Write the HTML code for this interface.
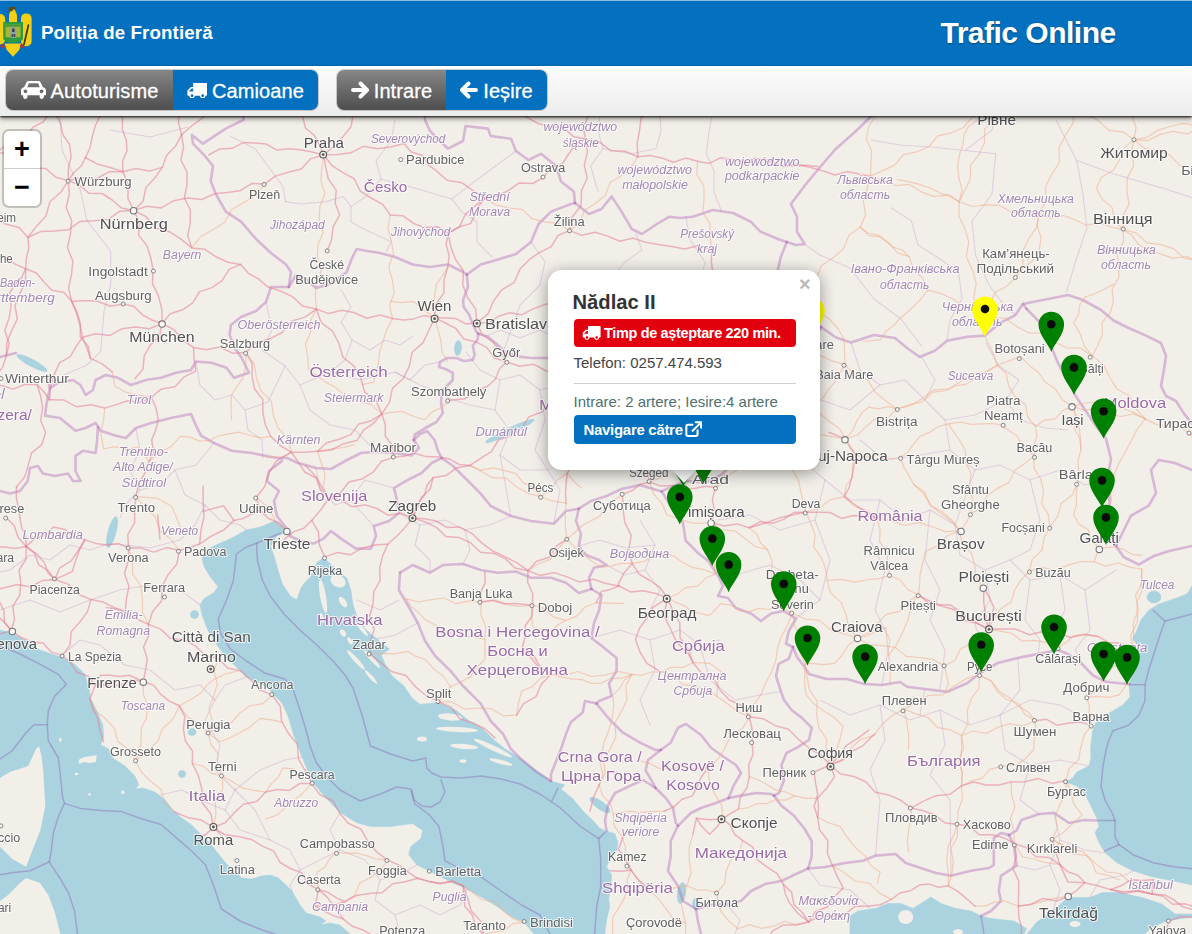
<!DOCTYPE html>
<html lang="ro"><head><meta charset="utf-8"><title>Trafic Online - Poliția de Frontieră</title>
<style>
html,body{margin:0;padding:0;width:1192px;height:934px;overflow:hidden;background:#f2efe9;font-family:"Liberation Sans",sans-serif;}
#map{position:absolute;left:0;top:0;filter:blur(.55px);}
#mk{position:absolute;left:0;top:0;}
#hdr{position:absolute;left:0;top:0;width:1192px;height:66px;background:#0371bf;border-top:1px solid #8bbde3;box-sizing:border-box;}
#crest{position:absolute;left:-6px;top:4px;}
#brand{position:absolute;left:41px;top:19.500px;font-size:18.700px;font-weight:bold;color:#fff;line-height:24px;white-space:nowrap;letter-spacing:.12px}
#title{position:absolute;left:940.500px;top:13.500px;font-size:30px;font-weight:bold;color:#fff;line-height:36px;white-space:nowrap;letter-spacing:-0.500px;text-shadow:0 1px 2px rgba(0,0,0,.35)}
#bar{position:absolute;left:0;top:66px;width:1192px;height:50px;background:linear-gradient(#fdfdfd,#ececec);box-shadow:0 1px 2px rgba(0,0,0,.85),0 3px 5px rgba(0,0,0,.4);}
.grp{position:absolute;top:4px;height:39.500px;display:flex;border-radius:7px;overflow:hidden;box-shadow:0 0 0 1px rgba(0,0,0,.18);}
.btn{height:39.500px;padding-top:4px;display:flex;align-items:center;justify-content:center;color:#fff;font-size:20px;letter-spacing:.1px;white-space:nowrap;box-sizing:border-box;-webkit-text-stroke:.3px #fff;}
.btn .ic{margin-right:5px;flex:none;position:relative;top:-1.500px}
.gray{background:linear-gradient(#868686,#4e4e4e);}
.blue{background:#0371bf;}
#zoom{position:absolute;left:4px;top:131px;width:36px;height:75px;background:#fff;border-radius:5px;box-shadow:0 0 0 2px rgba(0,0,0,.2);}
#zoom div{height:37px;text-align:center;font:bold 27px/36px "Liberation Sans",sans-serif;color:#000;}
#zoom div+div{border-top:1px solid #ccc;}
#pop{position:absolute;left:548px;top:270px;width:272px;height:200px;background:#fff;border-radius:14px;box-shadow:0 3px 16px rgba(0,0,0,.4);}
#tip{position:absolute;left:672px;top:470px;width:0;height:0;border-left:12.500px solid transparent;border-right:12.500px solid transparent;border-top:13.500px solid #fff;filter:drop-shadow(0 3px 3px rgba(0,0,0,.25));}
#pop h3{position:absolute;left:24.500px;top:19.500px;margin:0;font-size:20.200px;line-height:24px;font-weight:bold;color:#333;white-space:nowrap}
#pop .x{position:absolute;left:251px;top:2px;font:bold 20px/24px "Liberation Sans",sans-serif;color:#b9b9b9;}
#pop .red{position:absolute;left:25.500px;top:49px;width:222px;height:28px;border-radius:4px;background:#e2000f;color:#fff;font-size:14.500px;font-weight:bold;line-height:28px;white-space:nowrap;box-sizing:border-box;padding-left:8.500px;display:flex;align-items:center;letter-spacing:-0.350px}
#pop .red .ic{margin-right:3px}
#pop .tel{position:absolute;left:25.500px;top:83px;font-size:15px;line-height:20px;color:#444;white-space:nowrap}
#pop .hr{position:absolute;left:25.500px;top:112.500px;width:222px;height:1px;background:#cfcfcf}
#pop .art{position:absolute;left:25.500px;top:122px;font-size:15px;line-height:20px;color:#4f6f70;white-space:nowrap}
#pop .nav{position:absolute;left:25.500px;top:145px;width:222px;height:29px;border-radius:4px;background:#0371bf;color:#fff;font-size:15px;font-weight:bold;line-height:29px;white-space:nowrap;box-sizing:border-box;padding-left:10px;display:flex;align-items:center;letter-spacing:-0.300px}
#pop .nav .ic{margin-left:2px}
</style></head><body>
<svg id="map" width="1192" height="934" viewBox="0 0 1192 934">
<g>
<rect x="-5" y="-5" width="1202" height="944" fill="#f2efe9"/>
<g fill="#aad3df" stroke="#aad3df" stroke-width="0.6" stroke-linejoin="round">
<path d="M0.0 630.0 L12.0 633.0 L24.0 640.0 L40.0 650.0 L60.4 657.0 L74.5 664.0 L84.6 674.0 L88.6 686.4 L90.6 698.5 L96.6 710.6 L102.7 724.7 L103.7 736.8 L100.7 744.8 L108.7 748.9 L112.7 758.0 L124.8 766.0 L134.9 776.0 L138.9 785.0 L134.9 789.0 L143.0 788.0 L155.0 792.0 L165.0 800.0 L173.0 810.0 L181.0 817.5 L191.0 824.5 L201.0 834.6 L209.4 842.6 L217.4 852.7 L225.5 862.8 L233.0 870.0 L241.6 878.0 L252.0 879.0 L261.7 876.0 L270.0 875.0 L278.5 878.0 L292.0 891.0 L300.0 905.0 L306.0 913.0 L320.0 917.0 L326.0 921.0 L320.0 925.0 L330.0 923.0 L340.0 925.0 L350.0 934.0 L0.0 934.0Z"/>
<path d="M534.0 934.0 L524.0 922.0 L512.0 917.0 L501.0 909.0 L485.0 899.0 L467.0 889.0 L449.0 881.0 L428.9 870.8 L416.8 864.8 L408.7 854.7 L410.7 846.7 L420.8 838.6 L422.8 830.6 L412.7 823.5 L390.6 826.5 L370.5 826.5 L356.4 822.5 L340.0 812.4 L324.0 796.0 L312.0 781.0 L302.0 757.0 L297.0 744.0 L292.0 730.0 L288.0 716.0 L282.0 703.0 L272.0 693.0 L268.6 688.0 L246.4 677.0 L230.3 661.0 L218.3 647.0 L208.2 631.0 L202.0 614.8 L200.0 604.7 L204.0 598.7 L214.0 592.6 L218.0 586.6 L210.0 576.5 L204.0 566.4 L202.0 558.4 L206.0 550.0 L216.0 545.0 L232.0 538.0 L246.4 530.0 L260.5 527.0 L274.6 521.0 L282.7 526.0 L286.7 532.0 L276.6 536.0 L270.6 546.0 L274.6 558.0 L278.7 572.5 L282.7 584.6 L290.7 596.6 L296.8 599.7 L300.8 588.6 L304.8 582.5 L310.9 576.5 L316.9 562.4 L324.0 557.4 L333.0 566.4 L347.0 578.5 L351.0 590.6 L353.0 604.7 L357.0 616.8 L365.0 628.9 L377.0 638.9 L389.4 649.0 L381.3 655.0 L385.0 664.0 L392.0 676.0 L404.0 686.0 L412.0 698.0 L420.0 704.4 L438.4 702.4 L456.5 710.5 L468.6 720.5 L482.7 728.6 L494.8 740.7 L504.8 748.7 L521.0 758.8 L537.0 770.9 L551.0 781.0 L565.0 785.0 L561.0 789.0 L573.0 799.0 L583.0 811.0 L593.4 821.0 L599.5 828.0 L604.7 830.6 L614.8 833.6 L617.8 842.6 L616.8 850.7 L609.7 858.7 L606.7 866.8 L611.7 874.9 L610.7 887.0 L608.7 899.0 L609.7 907.0 L606.7 919.0 L604.7 934.0Z"/>
<path d="M1192.0 586.0 L1187.0 594.0 L1171.0 600.0 L1159.0 604.0 L1149.0 610.0 L1141.0 620.0 L1137.0 630.0 L1133.0 638.5 L1139.0 648.5 L1137.0 660.6 L1133.0 672.7 L1129.0 684.8 L1130.0 697.0 L1122.8 705.0 L1112.7 711.0 L1096.6 721.0 L1092.6 731.0 L1090.6 748.0 L1091.0 758.0 L1089.0 766.0 L1076.8 772.0 L1072.8 778.0 L1065.8 782.0 L1076.8 786.0 L1084.9 794.0 L1091.0 806.0 L1097.0 818.5 L1099.0 826.5 L1095.0 832.6 L1099.0 842.6 L1105.0 852.7 L1117.0 862.8 L1133.0 870.8 L1153.0 877.0 L1173.5 881.0 L1192.0 885.0Z"/>
<path d="M1027.0 934.0 L1036.8 922.0 L1053.0 910.7 L1068.0 897.6 L1089.5 897.6 L1102.6 892.6 L1119.0 892.6 L1142.0 897.6 L1161.8 904.0 L1175.0 914.0 L1192.0 914.0 L1192.0 917.0 L1168.0 920.6 L1152.0 927.0 L1145.0 934.0Z"/>
<path d="M850.0 934.0 L850.0 916.0 L857.9 911.0 L875.5 908.5 L888.0 903.5 L900.7 903.5 L913.0 908.5 L920.8 903.5 L930.9 897.0 L941.0 903.5 L956.0 908.5 L971.0 911.0 L981.0 916.0 L991.0 918.6 L1014.0 921.0 L1026.5 928.6 L1024.0 934.0Z"/>
<ellipse cx="510" cy="431" rx="27" ry="3.2" transform="rotate(-25 510 431)"/>
<ellipse cx="458" cy="348" rx="3.5" ry="7.5" transform="rotate(5 458 348)"/>
<ellipse cx="112" cy="532" rx="4" ry="16" transform="rotate(15 112 532)"/>
<ellipse cx="32" cy="363" rx="17" ry="3.5" transform="rotate(28 32 363)"/>
<ellipse cx="192" cy="732" rx="4" ry="3.5" transform="rotate(0 192 732)"/>
<ellipse cx="182" cy="774" rx="3.5" ry="3.5" transform="rotate(0 182 774)"/>
<ellipse cx="600" cy="805" rx="12" ry="4" transform="rotate(35 600 805)"/>
<ellipse cx="681.5" cy="893" rx="4" ry="10.5" transform="rotate(8 681.5 893)"/>
<ellipse cx="696" cy="904" rx="3.5" ry="6" transform="rotate(0 696 904)"/>
<ellipse cx="194.5" cy="614.5" rx="4" ry="4" transform="rotate(0 194.5 614.5)"/>
<ellipse cx="1154" cy="597" rx="7" ry="6" transform="rotate(0 1154 597)"/>
</g>
<g fill="#f2efe9">
<path d="M39.0 746.0 L41.5 756.0 L43.3 772.0 L45.3 806.0 L40.3 830.6 L32.2 850.7 L26.2 866.8 L12.0 858.7 L4.0 850.7 L0.0 846.7 L0.0 778.0 L10.0 772.0 L28.0 766.0 L32.0 758.0 L36.0 749.0Z"/>
<path d="M26.0 878.0 L40.0 883.0 L48.3 895.0 L54.4 911.0 L60.4 934.0 L0.0 934.0 L0.0 901.0 L8.0 895.0 L20.0 883.0Z"/>
<path d="M78.5 760.0 L84.0 757.0 L92.0 756.0 L96.6 755.0 L96.0 762.0 L90.0 763.0 L84.0 762.0 L79.0 764.0Z"/>
<ellipse cx="323" cy="596" rx="3" ry="17" transform="rotate(-10 323 596)"/>
<ellipse cx="338" cy="581" rx="8" ry="6" transform="rotate(30 338 581)"/>
<ellipse cx="343" cy="602" rx="3" ry="6" transform="rotate(-35 343 602)"/>
<ellipse cx="362" cy="629" rx="1.8" ry="9" transform="rotate(-40 362 629)"/>
<ellipse cx="356" cy="660" rx="2.2" ry="13" transform="rotate(-42 356 660)"/>
<ellipse cx="372" cy="659" rx="2" ry="12" transform="rotate(-42 372 659)"/>
<ellipse cx="371" cy="677" rx="1.8" ry="9" transform="rotate(-42 371 677)"/>
<ellipse cx="343" cy="633" rx="2.5" ry="4" transform="rotate(-30 343 633)"/>
<ellipse cx="350" cy="641" rx="2" ry="4" transform="rotate(-30 350 641)"/>
<ellipse cx="322" cy="618" rx="1.6" ry="5" transform="rotate(-15 322 618)"/>
<ellipse cx="450" cy="717" rx="12" ry="3.5" transform="rotate(5 450 717)"/>
<ellipse cx="457" cy="729.5" rx="21" ry="2.5" transform="rotate(3 457 729.5)"/>
<ellipse cx="464" cy="746.5" rx="14" ry="2.5" transform="rotate(5 464 746.5)"/>
<ellipse cx="493" cy="748" rx="21" ry="2.5" transform="rotate(25 493 748)"/>
<ellipse cx="501" cy="762" rx="12" ry="2" transform="rotate(15 501 762)"/>
<ellipse cx="422" cy="739" rx="5" ry="2.5" transform="rotate(0 422 739)"/>
<ellipse cx="463" cy="761" rx="3.5" ry="1.8" transform="rotate(0 463 761)"/>
<ellipse cx="122.8" cy="792.3" rx="1.6" ry="2" transform="rotate(0 122.8 792.3)"/>
<ellipse cx="89.6" cy="794.3" rx="1.3" ry="1.3" transform="rotate(0 89.6 794.3)"/>
<ellipse cx="76.5" cy="774" rx="1.8" ry="1.3" transform="rotate(0 76.5 774)"/>
<ellipse cx="60.4" cy="739.8" rx="1.3" ry="2" transform="rotate(20 60.4 739.8)"/>
<ellipse cx="905.7" cy="917" rx="7.5" ry="7" transform="rotate(0 905.7 917)"/>
<ellipse cx="958" cy="932" rx="5" ry="3" transform="rotate(0 958 932)"/>
<ellipse cx="1075" cy="924" rx="5.5" ry="3" transform="rotate(0 1075 924)"/>
</g>
<g fill="none" stroke="#b06ab8" stroke-opacity=".42" stroke-width="2.600" stroke-linejoin="round" stroke-linecap="round">
<path d="M243.5 116.0 L243.5 119.8 L225.8 128.6 L203.0 143.7 L191.9 134.9 L193.0 143.7 L203.0 153.8 L213.0 166.0 L210.7 181.0 L215.8 194.0 L225.8 211.6 L241.0 221.7 L256.0 239.0 L271.0 253.0 L286.0 264.5 L291.0 272.0 L288.8 287.0"/>
<path d="M288.8 287.0 L271.0 287.0 L266.0 302.0 L256.0 311.0 L241.0 317.0 L230.9 325.0 L229.6 335.0 L236.0 350.0 L241.6 357.7 L249.0 372.8 L234.0 377.8 L226.5 367.8 L211.4 362.7 L196.0 361.5 L191.0 370.0 L176.0 372.8 L161.0 377.8 L146.0 380.0 L130.9 385.0 L118.0 377.8 L105.7 375.0 L95.6 380.0 L93.0 390.0 L85.6 395.0 L80.5 385.0 L73.0 380.0 L57.9 382.9 L50.0 388.0"/>
<path d="M47.8 380.0 L50.0 388.0 L46.6 403.0 L45.0 415.6 L60.0 418.0 L75.5 430.7 L85.6 428.0 L95.6 423.0 L100.7 430.7 L115.8 435.7 L125.9 438.0 L135.9 428.0 L151.0 423.0 L171.0 418.0 L191.0 414.0 L196.0 425.6 L201.0 435.7 L214.0 443.0 L231.6 450.8 L251.7 453.0 L276.9 458.0 L287.0 458.0 L298.0 463.0 L316.0 468.0 L331.0 469.0 L346.0 460.5 L361.0 453.0 L376.0 451.7 L394.0 453.0 L411.6 455.5 L419.0 448.0 L413.7 440.0"/>
<path d="M98.0 427.0 L96.9 443.0 L95.6 453.0 L83.0 450.8 L75.5 455.8 L75.5 471.0 L80.5 481.0 L73.0 481.0 L68.0 473.5 L55.0 476.0 L42.8 473.5 L37.8 466.0 L30.0 468.0 L27.7 481.0 L20.0 491.0 L10.0 493.6 L0.0 491.0"/>
<path d="M0.0 357.0 L8.0 355.0 L16.0 353.0"/>
<path d="M282.0 460.9 L269.0 471.0 L266.8 481.0 L279.0 491.0 L274.0 501.0 L276.9 516.0 L287.0 528.8 L290.0 534.0"/>
<path d="M290.0 536.0 L300.8 541.0 L313.4 543.6 L323.5 538.6 L331.0 531.0 L341.0 538.6 L356.0 548.6 L371.0 548.6 L376.0 536.0 L373.8 526.0 L389.0 521.0 L399.0 513.0 L396.5 498.0 L394.0 488.0 L406.5 480.7 L421.6 473.0 L431.7 463.0 L441.8 458.0"/>
<path d="M288.8 287.0 L296.0 275.0 L306.0 279.0 L316.0 288.0 L330.0 284.0 L346.7 272.0 L352.0 258.0 L356.7 249.0 L367.0 251.0 L380.0 253.0 L395.0 257.0 L412.7 264.5 L430.0 267.0 L448.0 264.5 L463.0 272.0 L466.8 274.6"/>
<path d="M466.8 274.6 L468.0 287.0 L463.0 300.0 L463.7 307.0 L469.0 314.6 L472.8 323.7 L476.4 331.9 L478.3 333.7"/>
<path d="M466.8 274.6 L480.7 264.5 L498.0 259.5 L516.0 254.0 L531.0 242.0 L538.6 224.0 L551.0 211.6 L571.0 204.0 L575.0 203.0"/>
<path d="M425.0 116.0 L425.0 120.0 L430.0 131.0 L448.0 148.7 L463.0 141.0 L465.6 126.0 L488.0 128.6 L490.7 136.0 L511.0 138.7 L516.0 151.0 L528.5 160.0 L541.0 153.8 L556.0 166.0 L561.0 181.4 L573.8 191.5 L575.0 203.0"/>
<path d="M575.0 203.0 L589.0 214.0 L601.5 209.0 L611.6 196.5 L621.6 211.6 L631.7 229.0 L641.8 234.0 L657.0 224.0 L669.5 216.7 L680.0 218.0 L692.7 216.7 L712.9 210.0 L733.0 213.0 L750.6 221.7 L760.7 231.8 L778.0 239.0 L786.8 242.0"/>
<path d="M871.4 116.0 L856.0 131.0 L836.0 148.7 L821.0 166.0 L806.0 184.0 L790.9 204.0 L797.0 216.7 L797.0 231.8 L804.7 244.0 L796.0 245.0 L786.8 242.0"/>
<path d="M786.8 242.0 L780.8 257.0 L778.0 269.5 L777.0 285.0 L772.0 298.0"/>
<path d="M478.3 333.7 L487.4 336.4 L496.5 343.7 L503.7 351.0 L516.5 356.4 L531.0 358.0 L547.4 358.0 L565.0 352.0 L590.0 345.0 L610.0 335.0 L640.0 325.0 L670.0 318.0 L700.0 312.0 L730.0 305.0 L755.0 300.0 L772.0 298.0"/>
<path d="M772.0 298.0 L785.0 305.0 L800.0 315.0 L812.0 322.0 L821.0 327.0"/>
<path d="M478.3 333.7 L477.4 340.0 L472.8 345.5 L474.6 354.6 L472.8 360.0 L463.7 361.0 L456.4 358.0 L447.3 358.0 L440.0 361.9 L439.0 367.0 L445.5 369.0 L452.8 372.8 L452.8 380.0 L447.3 385.5 L441.9 391.0 L441.0 402.0 L442.8 412.9 L436.4 422.0 L423.7 429.0 L414.6 434.7 L413.7 440.0"/>
<path d="M413.7 440.0 L420.0 434.0 L427.0 431.0 L434.6 440.0 L438.0 451.0 L441.8 458.0"/>
<path d="M441.8 458.0 L453.0 466.0 L465.6 478.5 L480.7 493.6 L490.7 506.0 L510.9 516.0 L531.0 521.0 L553.7 523.8 L566.0 511.0 L578.8 508.7"/>
<path d="M578.8 508.7 L591.0 501.0 L606.5 496.0 L621.6 489.0 L640.0 485.0 L661.7 491.4"/>
<path d="M661.7 491.4 L675.5 485.0 L688.0 481.0 L705.7 482.6 L720.8 475.0 L735.0 462.0 L752.0 440.0 L770.0 415.0 L790.0 385.0 L805.0 360.0 L815.0 340.0 L821.0 327.0"/>
<path d="M821.0 327.0 L836.0 337.5 L851.0 342.5 L874.0 335.0 L895.0 338.0 L907.0 348.0 L919.7 357.0 L934.8 350.7 L947.4 340.6 L967.5 336.8 L985.0 335.6 L1000.0 323.0 L1015.0 315.4 L1022.9 304.0 L1026.7 309.0"/>
<path d="M1026.7 309.0 L1038.0 320.5 L1048.0 335.6 L1053.0 350.7 L1058.0 363.0 L1068.0 381.0 L1075.7 396.0 L1085.8 411.0 L1095.9 426.0 L1106.0 438.8 L1111.0 459.0 L1108.5 473.0 L1109.7 508.0 L1111.0 535.8 L1116.0 546.0"/>
<path d="M1022.9 304.0 L1043.0 300.0 L1068.0 295.0 L1083.0 300.0 L1101.0 310.0 L1113.5 320.5 L1128.6 328.0 L1146.0 335.6 L1161.0 343.0 L1166.0 355.7 L1163.8 370.8 L1161.0 386.0 L1166.0 396.0 L1176.0 401.0 L1184.0 413.6 L1192.0 423.7"/>
<path d="M1116.0 546.0 L1126.0 525.7 L1131.0 515.6 L1148.7 505.6 L1156.0 493.0 L1151.0 470.0 L1158.8 460.0 L1174.0 462.8 L1192.0 470.0"/>
<path d="M1116.0 546.0 L1123.6 557.0 L1138.7 564.7 L1153.8 556.0 L1169.0 551.0 L1192.0 545.9"/>
<path d="M661.7 491.4 L673.0 510.0 L683.0 522.9 L685.6 540.5 L698.0 553.0 L708.0 560.6 L718.0 575.7 L723.0 585.8 L718.0 595.9 L728.0 598.0 L735.9 608.0 L751.0 613.5 L761.0 621.0 L771.0 613.5 L783.7 611.0 L796.0 618.5 L788.8 631.0 L786.0 643.7 L793.0 647.0"/>
<path d="M793.0 647.0 L797.0 657.0 L803.9 666.0 L809.0 674.0 L826.5 679.0 L846.7 679.0 L864.0 684.0 L882.0 685.0 L900.0 682.0 L907.0 686.8 L924.7 689.0 L947.4 691.9 L967.5 683.0 L980.0 673.0 L997.7 663.0 L1017.8 657.9 L1038.0 654.0 L1058.0 650.0 L1068.0 654.0 L1083.0 665.0 L1093.0 675.5 L1106.0 681.8 L1127.0 684.0 L1130.0 684.0"/>
<path d="M793.0 647.0 L788.8 658.8 L778.7 663.8 L776.0 676.0 L781.0 691.5 L784.0 700.0 L791.6 710.0 L801.6 717.6 L811.7 727.7 L809.0 740.0 L796.6 747.8 L786.5 752.9 L781.5 765.0 L784.0 780.5 L779.0 793.0 L774.0 795.6"/>
<path d="M578.8 508.7 L576.0 521.0 L581.0 534.0 L578.8 546.0 L586.0 555.0 L599.0 560.0 L606.5 565.0 L594.0 567.7 L589.0 577.8 L591.4 589.0"/>
<path d="M400.0 572.7 L412.7 565.0 L430.0 572.7 L443.0 565.0 L463.0 564.0 L480.7 570.0 L498.0 572.7 L516.0 571.5 L531.0 577.8 L551.0 577.8 L566.0 582.8 L578.8 592.9 L591.4 589.0"/>
<path d="M400.0 572.7 L398.9 590.0 L407.7 605.0 L417.8 623.0 L425.0 640.7 L435.0 655.8 L450.5 670.9 L463.0 686.0 L480.7 703.6 L490.7 721.0 L503.0 733.8 L510.9 749.0 L521.0 759.0 L536.0 771.6 L551.0 781.0"/>
<path d="M591.4 589.0 L601.5 595.0 L599.0 610.5 L594.0 623.0 L591.4 638.0 L601.5 645.7 L616.6 658.0 L616.6 670.9 L609.0 683.5 L611.6 696.0 L599.0 701.0 L596.5 703.6"/>
<path d="M596.5 703.6 L585.0 701.0 L582.7 712.6 L571.0 722.0 L566.0 733.8 L561.0 749.0 L556.0 761.5 L551.0 774.0 L551.0 781.0"/>
<path d="M596.5 703.6 L610.0 720.0 L623.0 732.7 L640.5 742.8 L655.6 750.0 L660.7 750.0"/>
<path d="M660.7 750.0 L670.7 742.8 L678.0 727.7 L685.9 724.0 L701.0 735.0 L711.0 747.8 L721.0 755.0 L736.0 765.0 L741.0 773.0 L733.7 785.6 L728.6 798.0"/>
<path d="M660.7 750.0 L648.0 760.0 L645.6 770.5 L653.0 783.0 L655.6 788.0"/>
<path d="M655.6 788.0 L643.0 780.0 L630.5 785.6 L615.0 793.0 L607.8 805.7 L605.0 820.8 L606.6 830.9"/>
<path d="M655.6 788.0 L665.7 798.0 L673.0 808.0 L675.8 823.0 L678.0 825.8"/>
<path d="M678.0 825.8 L690.9 813.0 L701.0 808.0 L716.0 803.0 L728.6 798.0"/>
<path d="M728.6 798.0 L741.0 795.6 L756.0 793.0 L771.0 794.0 L774.0 795.6"/>
<path d="M774.0 795.6 L781.5 805.7 L794.0 815.8 L804.0 828.0 L811.7 841.0 L811.7 856.0 L809.0 866.0 L808.0 868.5"/>
<path d="M808.0 868.5 L796.6 873.7 L781.5 881.0 L766.0 883.7 L751.0 891.0 L741.0 901.0 L726.0 903.9 L711.0 905.0 L696.0 909.0"/>
<path d="M678.0 825.8 L670.7 841.0 L670.7 856.0 L668.0 871.0 L678.0 886.0 L683.0 901.0 L696.0 909.0"/>
<path d="M696.0 909.0 L698.0 921.5 L701.0 934.0"/>
<path d="M808.0 868.5 L825.0 867.0 L845.0 863.0 L863.0 860.7 L875.5 855.6 L895.6 854.0 L905.7 863.0 L920.8 868.0 L936.0 873.0 L951.0 875.8 L971.0 870.7 L988.8 868.0 L993.8 865.0 L993.8 838.0 L1001.0 833.0 L1009.0 835.0"/>
<path d="M1009.0 835.0 L1014.0 845.6 L1016.5 865.7 L1001.0 875.8 L998.8 891.0 L1001.0 901.0 L991.0 911.0 L981.0 916.0"/>
<path d="M1009.0 835.0 L1016.5 830.5 L1021.5 820.0 L1039.0 814.0 L1054.0 812.9 L1069.0 823.0 L1084.0 820.0 L1097.0 820.5"/>
</g>
<g fill="none" stroke="#b47fc0" stroke-opacity=".28" stroke-width="1.1" stroke-linejoin="round" stroke-linecap="round">
<path d="M80.5 190.5 L87.0 220.7 L110.7 251.0 L110.7 284.5 L104.0 311.0 L100.7 351.6 L87.0 365.0 L63.8 375.0"/>
<path d="M60.0 116.0 L62.0 150.0 L80.5 190.5"/>
<path d="M110.0 130.0 L150.0 137.0 L188.0 127.0"/>
<path d="M285.6 201.6 L300.7 204.0 L325.9 201.6 L343.5 196.5 L351.0 206.6 L351.0 221.7 L363.6 229.0 L381.0 236.8 L391.0 241.9 L386.0 252.0"/>
<path d="M285.6 201.6 L283.0 186.5 L268.0 166.0 L255.0 148.7 L230.0 136.0"/>
<path d="M351.0 206.6 L366.0 196.5 L381.0 179.0 L376.0 161.0 L391.0 141.0 L395.0 120.0"/>
<path d="M409.0 186.5 L426.5 191.5 L451.7 199.0 L461.8 211.6 L476.9 221.7 L476.9 241.9 L492.0 257.0"/>
<path d="M409.0 186.5 L381.0 179.0"/>
<path d="M451.7 199.0 L470.0 185.0 L490.0 170.0 L516.0 151.0"/>
<path d="M341.0 289.7 L351.0 307.0 L341.0 322.0 L352.0 340.0 L345.0 360.0 L330.0 372.0"/>
<path d="M266.0 302.0 L272.0 330.0 L262.0 350.0 L285.0 366.0 L300.0 385.0 L330.0 372.0 L360.0 380.0 L395.0 372.0 L420.0 385.0 L440.0 392.0"/>
<path d="M196.0 361.5 L200.0 385.0 L215.0 400.0 L232.0 395.0 L245.0 410.0 L268.0 402.0 L285.0 366.0"/>
<path d="M245.0 410.0 L248.0 430.0 L262.0 440.0 L263.0 458.0"/>
<path d="M300.0 385.0 L310.0 410.0 L330.0 425.0 L355.0 430.0 L376.0 451.7"/>
<path d="M598.0 191.5 L590.7 166.0 L603.0 148.7 L598.0 131.0 L600.0 116.0"/>
<path d="M721.6 211.6 L714.0 191.5 L714.0 171.0 L706.5 153.8 L709.0 131.0 L712.0 116.0"/>
<path d="M603.0 148.7 L631.0 153.8 L656.0 148.7 L661.0 131.0 L660.0 116.0"/>
<path d="M636.0 234.0 L642.0 250.0 L625.0 262.0 L610.0 280.0 L600.0 300.0 L590.0 345.0"/>
<path d="M531.0 242.0 L545.0 262.0 L540.0 285.0 L520.0 305.0 L503.7 351.0"/>
<path d="M686.0 217.0 L690.0 240.0 L705.0 262.0 L700.0 285.0 L712.0 305.0"/>
<path d="M891.0 207.8 L911.4 221.0 L918.0 245.0 L938.4 258.0 L958.6 272.0 L962.0 299.0 L950.0 320.0 L947.0 340.0"/>
<path d="M871.0 140.0 L900.0 145.0 L931.6 147.0 L965.0 150.5 L992.0 130.0 L995.0 116.0"/>
<path d="M995.7 153.8 L992.0 194.0 L972.0 221.0 L975.5 255.0 L989.0 285.0 L1000.0 300.0 L1015.0 315.0"/>
<path d="M965.0 150.5 L995.7 153.8"/>
<path d="M1056.0 120.0 L1076.7 160.6 L1083.0 194.0 L1086.8 228.0 L1076.7 258.0 L1066.6 292.0"/>
<path d="M1076.7 160.6 L1113.8 174.0 L1161.0 187.6 L1192.0 197.7"/>
<path d="M820.0 255.0 L850.0 268.0 L874.0 299.0 L901.0 319.0 L921.5 346.0"/>
<path d="M804.0 244.0 L820.0 255.0"/>
<path d="M985.6 342.7 L999.0 366.0 L1019.0 380.0 L1005.8 400.0 L1020.0 420.0 L1045.0 428.0 L1068.0 430.0"/>
<path d="M921.5 357.0 L935.0 380.0 L925.0 400.0 L945.0 420.0 L975.0 415.0 L1005.8 400.0"/>
<path d="M851.0 342.5 L860.0 370.0 L880.0 385.0 L905.0 380.0 L925.0 400.0"/>
<path d="M945.0 420.0 L950.0 450.0 L975.0 470.0 L1000.0 465.0 L1030.0 480.0 L1060.0 470.0 L1085.0 485.0 L1110.0 480.0"/>
<path d="M821.0 400.0 L850.0 410.0 L880.0 385.0"/>
<path d="M860.0 440.0 L885.0 460.0 L920.0 455.0 L950.0 450.0"/>
<path d="M825.0 480.0 L850.0 500.0 L880.0 500.0 L905.0 520.0 L930.0 510.0 L955.0 525.0 L975.0 470.0"/>
<path d="M955.0 525.0 L960.0 555.0 L985.0 570.0 L1010.0 560.0 L1030.0 580.0 L1060.0 575.0 L1085.0 590.0 L1116.0 570.0"/>
<path d="M1030.0 480.0 L1040.0 520.0 L1030.0 550.0 L1010.0 560.0"/>
<path d="M1060.0 575.0 L1065.0 610.0 L1050.0 640.0 L1058.0 650.0"/>
<path d="M985.0 570.0 L990.0 600.0 L975.0 625.0 L985.0 650.0 L980.0 673.0"/>
<path d="M930.0 510.0 L925.0 560.0 L940.0 590.0 L930.0 620.0 L945.0 650.0 L940.0 690.0"/>
<path d="M880.0 500.0 L870.0 540.0 L885.0 570.0 L875.0 610.0 L890.0 640.0 L882.0 685.0"/>
<path d="M825.0 480.0 L815.0 520.0 L830.0 560.0 L820.0 600.0 L796.0 618.0"/>
<path d="M760.0 440.0 L790.0 450.0 L825.0 480.0"/>
<path d="M718.0 520.0 L750.0 515.0 L780.0 530.0 L815.0 520.0"/>
<path d="M735.9 575.0 L770.0 565.0 L800.0 580.0 L820.0 600.0"/>
<path d="M1030.0 580.0 L1025.0 620.0 L1040.0 640.0 L1038.0 654.0"/>
<path d="M1085.0 590.0 L1090.0 630.0 L1075.0 650.0 L1083.0 665.0"/>
<path d="M413.0 336.0 L400.0 345.0 L385.0 340.0 L370.0 350.0 L352.0 340.0"/>
<path d="M440.0 361.9 L425.0 365.0 L410.0 380.0 L395.0 372.0"/>
<path d="M487.0 336.0 L500.0 330.0 L520.0 338.0 L540.0 330.0 L560.0 340.0 L565.0 352.0"/>
<path d="M466.0 352.0 L480.0 370.0 L500.0 380.0 L520.0 375.0 L540.0 390.0 L560.0 385.0 L580.0 400.0"/>
<path d="M500.0 380.0 L495.0 410.0 L510.0 431.0 L500.0 455.0 L510.9 516.0"/>
<path d="M448.0 398.0 L470.0 405.0 L495.0 410.0"/>
<path d="M540.0 390.0 L545.0 420.0 L535.0 450.0 L548.0 470.0"/>
<path d="M548.0 470.0 L560.0 490.0 L553.7 523.8"/>
<path d="M548.0 470.0 L520.0 470.0 L500.0 455.0"/>
<path d="M640.0 520.0 L655.0 545.0 L645.0 570.0 L660.0 590.0 L650.0 610.0"/>
<path d="M578.8 546.0 L600.0 540.0 L625.0 548.0 L655.0 545.0"/>
<path d="M606.5 565.0 L625.0 575.0 L645.0 570.0"/>
<path d="M591.4 638.0 L620.0 630.0 L650.0 640.0 L680.0 630.0 L700.0 645.0 L720.0 640.0"/>
<path d="M650.0 640.0 L655.0 670.0 L640.0 700.0 L650.0 725.0"/>
<path d="M700.0 645.0 L710.0 680.0 L735.0 700.0 L760.0 695.0 L781.0 691.5"/>
<path d="M316.0 468.0 L320.0 490.0 L335.0 505.0 L350.0 500.0 L373.8 526.0"/>
<path d="M350.0 500.0 L365.0 480.0 L394.0 488.0"/>
<path d="M399.0 513.0 L420.0 525.0 L445.0 520.0 L465.0 530.0 L490.0 525.0 L510.9 516.0"/>
<path d="M420.0 525.0 L415.0 545.0 L430.0 560.0 L430.0 572.0"/>
<path d="M465.0 530.0 L470.0 550.0 L463.0 564.0"/>
<path d="M357.0 600.0 L380.0 610.0 L398.9 600.0"/>
<path d="M377.0 638.9 L395.0 635.0 L417.8 623.0"/>
<path d="M135.9 428.0 L140.0 450.0 L130.0 470.0 L140.0 490.0 L125.0 505.0 L120.3 517.5"/>
<path d="M140.0 490.0 L160.0 485.0 L175.0 470.0 L196.0 465.0 L214.0 443.0"/>
<path d="M175.0 470.0 L185.0 495.0 L205.0 505.0 L220.0 520.0 L240.0 525.0 L246.4 530.0"/>
<path d="M205.0 505.0 L195.0 525.0 L180.0 540.0 L150.0 548.0 L125.0 545.0 L108.0 544.0"/>
<path d="M108.0 544.0 L90.0 550.0 L70.0 545.0 L50.0 560.0 L30.0 555.0 L10.0 570.0 L0.0 572.0"/>
<path d="M0.0 610.0 L30.0 600.0 L60.0 612.0 L90.0 600.0 L120.0 590.0 L150.0 585.0 L180.0 590.0 L200.0 604.7"/>
<path d="M60.0 657.0 L80.0 640.0 L100.0 645.0 L125.0 665.0 L150.0 670.0 L175.0 690.0 L200.0 685.0 L215.0 700.0"/>
<path d="M215.0 700.0 L225.0 685.0 L246.4 677.0"/>
<path d="M215.0 700.0 L205.0 720.0 L220.0 745.0 L215.0 770.0 L235.0 790.0"/>
<path d="M235.0 790.0 L260.0 770.0 L285.0 760.0 L302.0 757.0"/>
<path d="M235.0 790.0 L225.0 810.0 L200.0 800.0 L182.0 790.0 L160.0 795.0"/>
<path d="M235.0 790.0 L255.0 810.0 L270.0 840.0 L290.0 850.0 L300.0 870.0"/>
<path d="M225.0 810.0 L240.0 830.0 L270.0 840.0"/>
<path d="M340.0 812.4 L330.0 830.0 L340.0 850.0 L320.0 860.0 L300.0 870.0"/>
<path d="M300.0 870.0 L290.0 885.0 L292.0 891.0"/>
<path d="M340.0 850.0 L365.0 860.0 L380.0 880.0 L400.0 875.0 L416.8 864.8"/>
<path d="M380.0 880.0 L375.0 900.0 L395.0 915.0 L400.0 934.0"/>
<path d="M395.0 915.0 L420.0 905.0 L440.0 915.0 L460.0 905.0 L467.0 889.0"/>
<path d="M808.0 868.5 L820.0 885.0 L850.0 890.0 L870.0 908.0"/>
<path d="M726.0 903.9 L740.0 920.0 L735.0 934.0"/>
<path d="M1054.0 812.9 L1060.0 840.0 L1050.0 865.0 L1060.0 890.0 L1053.0 910.7"/>
<path d="M1060.0 840.0 L1085.0 850.0 L1105.0 852.7"/>
<path d="M1089.5 897.6 L1100.0 880.0 L1125.0 875.0 L1133.0 870.8"/>
<path d="M1016.5 865.7 L1035.0 870.0 L1050.0 865.0"/>
<path d="M820.0 700.0 L850.0 715.0 L880.0 705.0 L910.0 720.0 L940.0 710.0 L970.0 725.0 L1000.0 715.0"/>
<path d="M880.0 705.0 L885.0 740.0 L870.0 770.0 L880.0 800.0 L875.5 855.6"/>
<path d="M940.0 710.0 L945.0 745.0 L930.0 775.0 L950.0 800.0 L951.0 875.8"/>
<path d="M1000.0 715.0 L1005.0 750.0 L1030.0 765.0 L1020.0 800.0 L1039.0 814.0"/>
<path d="M1030.0 765.0 L1060.0 760.0 L1089.0 766.0"/>
<path d="M1000.0 715.0 L1030.0 700.0 L1060.0 705.0 L1090.0 721.0"/>
<path d="M1017.8 657.9 L1020.0 690.0 L1000.0 715.0"/>
<path d="M924.7 689.0 L920.0 715.0"/>
</g>
<g fill="none" stroke="#8d6bb5" stroke-opacity=".45" stroke-width="1.5" stroke-linejoin="round" stroke-linecap="round">
<path d="M280.7 533.0 L256.5 543.3 L246.4 547.0 L236.4 554.0 L233.4 580.5 L226.3 600.7 L218.3 618.8 L220.3 633.0 L230.3 649.0 L246.4 661.0 L264.6 673.0 L284.7 679.0 L292.7 688.0 L300.0 710.0 L306.0 730.0 L310.0 746.0 L316.0 762.0 L326.0 776.0 L340.0 790.0 L360.4 801.0 L380.5 794.0 L396.6 787.0 L410.7 789.0 L414.8 804.0 L428.9 814.5 L438.9 826.5 L443.0 846.7 L445.0 860.8 L461.0 868.8 L481.0 876.9 L501.0 891.0 L521.5 905.0 L540.0 915.0 L550.0 934.0"/>
<path d="M256.5 543.3 L257.5 560.4 L262.5 580.5 L270.6 596.6 L284.7 614.8 L300.8 630.9 L316.9 645.0 L333.0 661.0 L345.0 675.0 L353.0 688.0 L362.0 715.0 L370.5 746.0 L390.6 754.0 L412.7 761.0 L425.8 758.0 L426.8 768.0 L431.9 773.0 L440.9 777.0 L461.0 778.0 L481.0 776.0 L501.0 779.0 L520.0 784.0 L540.0 794.0 L560.4 808.0 L580.5 826.5 L598.7 838.6 L600.7 858.7 L600.7 887.0 L596.6 907.0 L594.6 934.0"/>
<path d="M411.7 790.0 L414.0 800.0 L422.0 806.0 L431.0 807.0 L440.0 802.0 L445.0 792.0 L441.0 780.0"/>
<path d="M558.0 788.0 L552.0 801.0"/>
<path d="M598.7 838.6 L604.7 832.6"/>
<path d="M51.3 746.0 L58.4 758.0 L60.4 776.0 L62.4 796.0 L64.4 803.4 L80.5 808.4 L100.7 810.4 L120.8 811.4 L140.9 818.5 L161.0 824.5 L175.0 836.6 L191.3 850.7 L205.4 864.8 L213.4 885.0 L221.5 909.0 L240.0 921.0 L262.0 930.0 L275.0 934.0"/>
<path d="M64.4 803.4 L58.4 816.5 L53.4 832.6 L51.3 850.7 L49.3 861.8 L30.2 870.8 L12.0 872.8 L0.0 874.8"/>
<path d="M49.3 861.8 L60.4 879.0 L68.5 893.0 L74.5 911.0 L77.5 934.0"/>
<path d="M0.0 759.0 L12.0 751.0 L26.0 732.7 L34.0 724.7 L47.3 724.7 L48.3 710.6 L54.4 696.5 L66.4 684.4 L58.4 674.4 L40.3 664.3 L20.0 654.0 L6.0 648.0 L0.0 646.0"/>
<path d="M47.3 724.7 L48.3 740.8 L51.3 746.0"/>
<path d="M1192.0 614.0 L1177.0 618.0 L1165.0 621.0 L1161.0 632.0 L1155.0 650.6 L1149.0 668.7 L1145.0 684.8 L1145.0 701.0 L1138.9 715.0 L1128.8 725.0 L1112.7 731.0 L1108.7 741.0 L1107.0 746.0 L1103.0 766.0 L1101.0 786.0 L1105.0 800.0 L1113.0 814.5 L1115.0 820.5 L1115.0 836.6 L1119.0 844.7 L1133.0 854.7 L1153.3 862.8 L1173.5 866.8 L1192.0 868.8"/>
<path d="M1129.0 684.8 L1145.0 684.8"/>
<path d="M1099.0 820.5 L1115.0 820.5"/>
<path d="M1119.0 844.7 L1105.0 850.7"/>
<path d="M1153.0 610.0 L1165.0 621.0"/>
<path d="M981.0 916.0 L984.0 934.0"/>
</g>
<g fill="none" stroke-linejoin="round" stroke-linecap="round">
<g stroke="#f2a988" stroke-opacity=".5" stroke-width="1.2">
<path d="M711.2 522.0 L709.5 535.2 L715.7 547.8 L714.3 560.9 L715.2 573.9 L705.4 578.3 L697.6 586.1 L686.1 587.4 L677.6 594.0 L667.4 598.0"/>
<path d="M711.2 522.0 L721.2 530.0 L734.8 530.8 L745.0 538.4 L755.1 546.5 L767.5 549.6 L771.9 560.5 L771.9 572.2 L771.0 584.0 L778.1 594.3 L777.7 606.0 L792.5 613.2 L805.2 619.0 L819.5 620.4 L830.7 630.0 L844.1 633.8 L857.4 638.0 L869.1 632.9 L877.6 623.4 L886.4 614.3 L899.5 611.4 L908.0 601.8 L918.3 594.8"/>
<path d="M749.3 527.7 L756.7 533.9 L760.6 543.0 L767.5 549.6"/>
<path d="M857.4 638.0 L869.0 644.5 L882.3 645.7 L895.4 647.5 L906.3 656.4 L919.6 657.5 L932.7 659.4 L944.4 665.7 L954.9 660.5 L960.4 649.2 L970.5 643.6 L981.2 638.6 L988.2 629.2"/>
<path d="M792.5 613.2 L794.8 626.2 L801.6 638.0 L799.9 651.9 L805.0 664.1 L807.2 677.0 L809.4 689.8 L817.3 701.3 L816.6 714.8 L818.8 727.7 L826.7 739.1 L825.9 752.7 L830.1 765.0"/>
<path d="M877.3 518.7 L880.1 530.0 L879.6 542.0 L887.2 552.3 L887.5 564.1 L889.8 575.5 L900.4 580.3 L907.9 589.7 L918.3 594.8"/>
<path d="M877.3 518.7 L891.1 520.5 L904.4 525.5 L918.9 522.4 L932.3 526.7 L945.6 531.6 L959.8 531.0 L961.9 543.6 L971.3 553.1 L974.8 565.1 L976.2 578.0 L983.7 588.4"/>
<path d="M959.8 531.0 L966.2 523.0 L970.6 513.8 L981.6 507.6 L987.3 495.5 L997.5 488.4 L1008.9 482.6 L1014.6 470.5 L1024.8 463.4 L1034.3 455.5 L1033.8 445.8 L1036.8 436.2 L1035.4 426.4 L1027.8 417.0 L1025.3 404.4 L1015.1 396.6 L1008.8 386.4 L1006.2 373.8 L997.3 365.2 L992.6 352.2 L986.5 339.8 L982.8 330.5 L983.2 320.0 L979.1 310.8"/>
<path d="M988.2 629.2 L994.1 618.9 L1000.4 608.9 L1011.1 602.1 L1014.6 590.0 L1020.9 580.1 L1029.2 571.5 L1032.2 559.4 L1041.9 550.3 L1044.1 537.8 L1049.7 526.9 L1048.3 514.7 L1041.6 503.7 L1043.7 490.8 L1040.6 479.0 L1034.0 468.0 L1034.3 455.5"/>
<path d="M1035.4 426.4 L1044.2 420.3 L1055.4 418.7 L1063.0 410.2 L1073.0 406.4"/>
<path d="M1049.7 526.9 L1057.7 516.7 L1061.1 503.6 L1072.1 495.3 L1077.5 483.5 L1078.8 472.3 L1078.0 460.8 L1081.0 449.7 L1079.8 438.7 L1074.4 428.5 L1076.7 416.9 L1073.0 406.4"/>
<path d="M1029.2 571.5 L1041.8 567.3 L1055.5 570.4 L1068.0 565.1 L1080.7 561.5 L1094.0 561.8 L1099.2 548.0"/>
<path d="M1094.0 561.8 L1105.6 566.2 L1118.3 563.0 L1129.9 567.1 L1141.8 569.1"/>
<path d="M1132.2 649.1 L1130.8 635.4 L1137.1 622.6 L1138.2 609.2 L1135.6 595.4 L1142.0 582.6 L1141.8 569.1"/>
<path d="M988.2 629.2 L987.3 639.9 L986.1 650.5 L980.2 660.3 L980.8 671.2 L979.7 675.2 L978.9 688.1 L971.1 698.9 L967.2 710.9 L968.0 724.3 L961.5 735.5 L963.6 748.1 L958.6 760.7 L962.4 773.3 L961.5 785.9 L962.4 798.9 L958.0 811.4 L957.5 824.3"/>
<path d="M979.7 675.2 L990.8 680.5 L997.2 691.4 L1006.3 699.2 L1018.4 703.2 L1024.8 714.2 L1034.9 720.7"/>
<path d="M988.2 629.2 L1000.2 631.2 L1012.0 633.5 L1022.5 641.2 L1035.2 640.3 L1047.0 642.7 L1058.2 647.5"/>
<path d="M1132.2 649.1 L1125.2 660.8 L1112.7 667.1 L1104.0 677.1 L1097.9 689.6 L1086.6 697.2 L1089.6 706.4 L1088.2 716.2 L1091.2 725.4 L1084.0 735.4 L1080.8 747.3 L1078.7 759.6 L1069.0 768.5 L1066.2 780.5"/>
<path d="M830.1 765.0 L842.4 759.4 L850.6 748.2 L860.6 739.5 L874.1 735.4 L882.3 724.2 L892.3 715.5 L904.0 709.0 L915.7 713.9 L928.0 717.5 L937.3 727.4 L950.2 729.8 L961.5 735.5 L973.3 731.0 L986.5 733.4 L998.0 727.3 L1010.0 723.6 L1023.2 726.0 L1034.9 720.7"/>
<path d="M904.0 709.0 L916.5 703.0 L928.3 695.6 L943.0 694.6 L954.3 686.0 L966.1 678.7 L979.7 675.2"/>
<path d="M715.7 487.6 L724.0 476.8 L725.2 462.5 L733.4 451.6 L741.6 440.7 L742.8 426.4 L751.0 415.6 L757.8 403.3 L770.4 396.0 L778.9 385.2 L784.8 372.1 L797.5 365.0 L805.0 353.4 L818.9 354.9 L831.6 360.8 L844.9 364.3"/>
<path d="M751.0 415.6 L765.2 416.0 L777.5 424.0 L791.2 426.7 L805.7 426.0 L818.0 434.1 L831.7 436.6 L845.4 438.9 L849.9 447.8 L856.2 455.5 L867.3 457.2 L878.6 454.1 L889.4 458.9 L900.6 458.0 L903.8 467.3 L909.0 475.7 L913.7 484.3 L924.5 492.1 L930.1 505.0 L941.9 511.8 L952.1 520.1 L959.8 531.0"/>
<path d="M845.4 438.9 L857.2 435.3 L866.0 426.6 L875.3 418.8 L888.2 417.3 L897.2 408.9 L910.6 405.5 L922.5 398.5 L933.6 389.9 L948.2 389.1 L960.0 382.0 L971.2 373.5 L985.7 372.8 L997.3 365.2"/>
<path d="M856.2 455.5 L852.2 465.5 L852.7 476.8 L845.9 486.0 L844.3 496.7 L830.7 499.6 L819.3 508.0 L806.2 512.2"/>
<path d="M844.3 496.7 L854.0 506.0 L866.8 510.6 L877.3 518.7"/>
<path d="M845.4 438.9 L839.8 428.7 L830.1 422.0 L821.2 414.7 L815.3 404.7 L815.2 391.4 L810.3 379.0 L805.0 366.7 L805.0 353.4"/>
<path d="M844.9 364.3 L854.4 374.3 L867.7 379.9 L875.2 392.3 L885.9 401.0 L897.2 408.9"/>
<path d="M806.2 512.2 L810.7 523.3 L815.0 534.4 L813.9 547.2 L821.3 557.3 L825.5 568.4 L827.2 580.3 L830.7 593.2 L841.2 602.4 L846.0 614.6 L848.8 627.8 L857.4 638.0"/>
<path d="M751.0 415.6 L744.3 406.5 L743.9 394.8 L739.1 385.0 L733.9 375.3"/>
<path d="M870.5 176.2 L882.9 180.6 L895.3 185.5 L909.3 184.3 L920.9 191.6 L933.3 196.4 L947.3 195.3 L959.2 201.7 L972.1 206.5 L985.9 204.8 L999.3 205.3 L1011.9 212.2 L1025.7 210.5 L1038.9 213.1 L1050.4 218.2 L1063.4 215.5 L1075.0 219.8 L1086.4 225.3 L1099.5 222.6 L1111.1 227.0 L1123.1 229.7 L1136.3 232.9 L1146.8 242.8 L1160.7 244.5 L1173.6 248.6 L1184.2 258.4 L1198.1 260.1 L1211.0 264.2 L1222.6 271.3"/>
<path d="M870.5 176.2 L882.3 170.6 L894.4 165.4 L903.5 154.7 L916.8 151.8 L928.9 146.5 L937.9 135.8 L951.3 132.9 L963.3 127.5 L972.4 116.9 L985.7 114.0 L996.8 106.8 L1009.8 106.2 L1022.6 110.7 L1035.8 106.3 L1048.8 107.6 L1061.6 112.0 L1074.7 109.5 L1087.5 113.7 L1098.7 121.1 L1108.9 130.3 L1123.0 131.8 L1133.9 139.9 L1147.6 140.6 L1160.1 134.4 L1173.2 131.4 L1187.3 133.9 L1199.8 127.6 L1212.9 124.7 L1227.0 127.2 L1239.7 122.1"/>
<path d="M870.5 176.2 L867.1 188.8 L863.3 201.2 L865.6 214.9 L860.2 227.1 L848.9 235.3 L843.5 248.9 L833.1 257.8 L821.4 265.7 L816.0 279.3 L805.5 288.2 L795.9 298.0 L788.4 291.9 L779.9 287.2 L771.5 282.5 L760.0 279.0 L748.2 278.0 L735.9 280.3 L724.9 273.7 L712.9 273.9"/>
<path d="M860.2 227.1 L868.5 235.4 L881.0 236.9 L889.9 244.3 L897.9 253.1 L909.2 256.6 L913.4 268.9 L922.8 278.4 L927.9 290.2 L941.4 293.7 L954.0 299.4 L965.2 308.4 L979.1 310.8 L989.7 304.0 L995.4 292.0 L1006.9 286.2 L1015.5 277.3 L1022.9 265.5 L1022.9 250.9 L1028.8 238.5 L1036.9 226.9 L1038.9 213.1"/>
<path d="M959.2 201.7 L958.9 215.9 L964.9 228.9 L968.8 242.2 L966.3 256.8 L972.4 269.8 L976.2 283.2 L973.8 297.7 L979.1 310.8"/>
<path d="M1123.1 229.7 L1122.5 216.6 L1129.0 204.4 L1126.9 191.1 L1127.2 178.1 L1133.7 165.9 L1131.5 152.6 L1133.9 139.9"/>
<path d="M1133.9 139.9 L1144.4 148.3 L1157.9 150.3 L1170.0 155.3 L1179.7 165.3 L1193.3 167.3 L1205.4 172.4 L1216.4 179.7 L1218.0 192.8 L1220.2 205.8 L1216.1 219.2 L1220.8 232.0 L1222.9 245.0 L1218.8 258.4 L1222.6 271.3 L1221.7 285.4 L1228.4 298.4 L1230.0 312.2 L1227.8 326.5 L1234.5 339.5 L1236.0 353.2 L1233.9 367.5 L1240.6 380.5 L1242.1 394.3 L1240.0 408.6 L1246.8 421.6 L1248.1 435.4 L1246.1 449.7 L1251.1 462.9"/>
<path d="M1239.7 122.1 L1237.6 134.7 L1228.2 144.3 L1225.2 156.5 L1223.6 169.3 L1216.4 179.7"/>
<path d="M979.1 310.8 L990.9 317.9 L1005.3 318.2 L1016.6 326.5 L1028.6 332.8 L1043.1 333.2 L1054.3 341.6 L1066.4 347.8 L1080.8 348.2 L1092.3 355.9 L1103.3 364.6 L1109.7 377.2 L1117.0 388.9 L1129.7 396.1 L1136.1 408.7 L1145.2 418.9 L1155.8 424.1 L1167.1 426.9 L1179.4 426.9 L1189.6 433.1 L1200.6 441.7 L1214.8 443.8 L1227.2 449.5 L1237.5 459.6 L1251.1 462.9"/>
<path d="M1073.0 406.4 L1084.7 410.3 L1097.6 407.6 L1108.9 413.8 L1120.9 416.5 L1133.7 413.9 L1145.2 418.9"/>
<path d="M1123.1 229.7 L1123.5 241.9 L1117.0 253.2 L1119.0 265.7 L1118.7 277.8 L1112.1 289.1 L1113.4 301.4 L1110.3 312.7 L1102.2 322.1 L1102.4 334.7 L1097.7 345.4 L1092.3 355.9"/>
<path d="M1038.9 213.1 L1046.0 201.1 L1045.6 186.4 L1051.9 174.1 L1059.4 162.2 L1059.0 147.6 L1065.4 135.3 L1072.8 123.4 L1074.7 109.5"/>
<path d="M996.8 106.8 L993.1 119.1 L984.6 129.5 L984.5 143.1 L978.9 154.7 L970.6 165.1 L970.4 178.7 L964.8 190.2 L959.2 201.7"/>
<path d="M406.2 598.8 L418.6 602.0 L431.3 599.7 L443.9 598.0 L456.2 603.7 L468.8 601.2 L481.3 602.0 L494.3 599.9 L506.9 604.6 L519.6 606.4 L532.5 605.2 L544.3 608.7 L553.7 617.2 L565.5 620.4 L576.6 616.1 L585.1 607.0 L596.3 602.8 L609.9 603.1 L623.6 603.6"/>
<path d="M438.7 701.9 L452.0 701.9 L464.2 709.1 L477.7 708.0 L491.0 708.6 L503.1 715.8 L516.6 715.2"/>
<path d="M550.7 674.4 L564.3 675.3 L577.9 671.5 L591.4 676.5 L605.0 675.2 L618.5 671.5 L632.1 674.4 L641.9 675.3 L651.4 672.0 L661.1 672.0 L671.3 667.4 L682.9 667.5 L693.0 662.5"/>
<path d="M661.1 672.0 L673.2 674.8 L682.3 684.4 L694.8 686.1 L706.6 689.5 L716.9 696.4 L727.4 703.7 L737.6 711.4 L749.3 716.8"/>
<path d="M599.1 785.1 L602.5 795.3 L610.2 803.3 L613.3 813.6 L614.0 825.7 L621.5 835.7 L625.6 846.9 L624.6 859.6 L631.0 869.9 L637.5 879.0 L645.8 886.6 L659.4 884.1 L673.1 888.1 L686.7 885.8 L696.4 889.8 L706.9 890.0 L716.9 892.6"/>
<path d="M599.1 785.1 L605.1 773.5 L603.8 759.7 L610.5 748.3 L616.0 736.6 L614.8 722.8 L621.5 711.4 L627.0 699.7 L625.7 685.9 L632.1 674.4"/>
<path d="M707.8 768.1 L709.4 781.4 L714.5 793.7 L721.6 805.4 L722.6 818.9"/>
<path d="M707.8 768.1 L717.8 759.2 L724.9 748.0 L730.5 735.5 L742.7 728.5 L749.3 716.8"/>
<path d="M686.7 885.8 L691.1 873.3 L689.2 859.9 L689.2 846.8 L693.0 834.2"/>
<path d="M716.9 892.6 L724.6 883.5 L726.2 871.2 L730.5 860.4 L740.0 852.1 L742.5 840.3"/>
<path d="M135.4 760.4 L141.4 772.1 L150.8 781.3 L161.2 789.7 L164.9 803.1 L174.7 812.0"/>
<path d="M89.9 698.8 L95.2 710.8 L105.8 718.8 L114.4 728.3 L117.9 741.6 L128.6 749.6 L135.4 760.4"/>
<path d="M222.5 775.9 L211.8 773.3 L203.0 766.0 L192.3 763.5"/>
<path d="M208.3 733.2 L199.2 723.4 L187.3 716.7 L179.3 705.8"/>
<path d="M208.3 733.2 L210.8 744.2 L217.9 753.7 L217.4 765.7 L222.5 775.9 L222.7 789.2 L215.3 801.1 L215.8 814.5 L213.4 827.3"/>
<path d="M218.5 658.6 L214.0 670.6 L217.4 683.8 L213.8 695.9 L208.9 707.9 L212.3 721.1 L208.3 733.2"/>
<path d="M272.0 694.9 L262.9 703.7 L249.7 705.9 L239.7 713.3 L231.0 722.9 L217.8 725.0 L208.3 733.2"/>
<path d="M463.1 885.8 L473.0 892.5 L482.3 900.0 L495.1 901.8 L503.4 911.0 L512.7 918.4 L524.0 922.7"/>
<path d="M483.6 934.7 L493.8 932.1 L504.4 930.5 L513.2 923.4 L524.0 922.7"/>
<path d="M387.5 860.1 L380.5 870.0 L370.8 877.1 L359.9 883.0 L354.9 895.0 L344.8 901.7"/>
<path d="M540.5 496.7 L550.6 490.3 L557.1 479.9 L567.2 473.6"/>
<path d="M470.0 465.4 L481.4 471.4 L492.6 477.7 L506.4 478.4 L516.6 487.0 L527.9 493.3 L540.5 496.7 L553.0 501.2 L566.1 503.2 L565.1 515.2 L565.5 527.2 L566.7 539.1"/>
<path d="M649.7 481.9 L662.1 477.3 L670.4 466.6 L680.9 459.1 L694.2 456.0 L703.2 446.4"/>
<path d="M651.4 404.7 L663.2 400.3 L674.2 394.0 L687.7 394.7 L698.5 387.7 L709.5 381.4 L723.1 382.1 L733.9 375.3"/>
<path d="M637.8 156.8 L630.9 167.5 L621.2 175.7 L610.1 182.5 L605.3 195.2 L595.6 203.3 L584.5 210.2 L579.7 222.9 L569.5 230.6"/>
<path d="M697.5 161.2 L696.8 174.3 L703.9 186.1 L704.0 199.1 L702.9 212.2 L710.0 224.0 L710.1 237.0 L711.7 249.7"/>
<path d="M712.9 273.9 L705.2 283.4 L704.3 296.4 L696.4 305.7 L688.8 315.3 L685.6 327.0"/>
<path d="M591.7 285.9 L604.9 282.2 L618.6 282.9 L632.4 284.7 L645.3 278.2 L659.0 278.9 L672.8 280.6 L685.7 274.1 L699.4 274.9 L712.9 273.9"/>
<path d="M484.8 198.2 L496.1 204.9 L508.8 208.0 L522.1 209.4 L532.4 218.8 L545.1 221.8 L558.4 223.3 L569.5 230.6"/>
<path d="M390.3 214.9 L387.9 227.9 L391.2 240.8 L393.6 253.7 L388.7 266.7 L392.1 279.6 L394.4 292.5 L389.5 305.6 L392.6 318.5"/>
<path d="M264.6 184.1 L255.8 195.1 L243.9 202.5 L231.6 209.5 L224.6 222.5 L212.7 229.8 L200.4 236.8 L191.8 247.9"/>
<path d="M323.8 155.0 L321.8 167.8 L320.9 180.6 L324.9 193.7 L319.9 206.3 L319.1 219.1 L323.1 232.2 L318.0 244.8 L317.3 257.7 L321.2 270.7 L316.1 283.3 L315.4 296.2 L316.4 309.1"/>
<path d="M245.8 352.5 L254.2 363.8 L256.4 377.8 L261.0 390.7 L271.2 401.1 L273.4 415.2 L278.1 428.1 L288.3 438.5 L291.3 452.2"/>
<path d="M317.5 451.3 L321.2 462.9 L325.0 474.4 L323.3 487.2 L328.9 498.3"/>
<path d="M256.1 497.5 L265.1 504.6 L271.9 513.7 L277.2 524.4 L286.8 531.0"/>
<path d="M136.0 496.7 L145.0 507.1 L155.1 516.7 L159.8 530.7 L171.0 539.4 L179.3 550.5"/>
<path d="M128.6 548.0 L132.5 560.6 L132.5 574.2 L140.8 585.6 L142.4 598.8 L142.5 612.4 L148.5 624.4"/>
<path d="M832.4 865.4 L843.9 872.6 L854.9 881.0 L869.3 883.3 L879.4 893.1 L891.5 899.4"/>
<path d="M957.5 824.3 L957.5 836.9 L950.9 848.5 L953.2 861.4 L952.0 873.8 L948.4 885.8"/>
<path d="M1011.0 782.0 L1011.6 794.3 L1015.0 806.4 L1010.5 819.0 L1013.7 831.1 L1014.4 843.4"/>
<path d="M1066.2 780.5 L1066.0 793.0 L1060.1 804.0 L1055.4 815.4 L1057.5 828.4 L1051.9 839.5 L1063.0 845.8 L1073.0 853.8 L1086.6 855.3 L1096.3 864.1 L1106.4 872.0 L1120.0 873.5 L1129.7 882.3 L1139.8 890.2 L1152.1 894.1"/>
<path d="M870.5 176.2 L870.9 163.8 L871.7 151.3 L866.3 139.0 L868.8 126.5 L876.0 115.3 L880.7 102.9 L885.8 90.7"/>
<path d="M996.8 106.8 L995.2 97.0 L996.6 86.9 L993.9 77.2"/>
<path d="M1133.9 139.9 L1136.1 127.2 L1131.4 114.9 L1130.0 102.4 L1134.1 89.5 L1130.5 77.2"/>
<path d="M996.8 106.8 L988.0 103.5 L980.4 97.6 L971.2 95.2 L961.7 95.1 L952.2 93.7 L942.7 95.2"/>
<path d="M1133.9 139.9 L1146.8 137.6 L1157.8 130.2 L1170.3 126.5 L1183.4 123.4 L1197.1 125.9 L1210.1 122.1"/>
<path d="M1123.1 229.7 L1132.1 235.3 L1138.2 244.4 L1147.5 249.7 L1160.1 253.8 L1172.6 258.1 L1186.6 256.6 L1198.7 262.7 L1210.8 266.6 L1222.6 271.3"/>
<path d="M1123.1 229.7 L1114.6 220.5 L1112.1 207.6 L1102.3 199.3 L1096.3 188.5 L1101.6 177.1 L1113.1 170.4 L1119.4 159.8 L1124.1 147.9 L1133.9 139.9"/>
<path d="M1038.9 213.1 L1037.0 225.3 L1041.0 237.5 L1039.4 249.7 L1033.0 260.2 L1023.3 268.0 L1015.5 277.3"/>
<path d="M959.2 201.7 L950.7 195.7 L940.4 193.3 L931.3 188.5 L920.2 184.6 L908.9 181.6 L897.2 179.7"/>
<path d="M959.2 201.7 L962.1 189.6 L958.8 177.5 L957.6 165.3 L959.8 153.2 L963.0 144.4 L963.9 134.9 L968.3 126.5 L977.7 119.8 L988.3 114.9 L996.8 106.8"/>
<path d="M909.2 256.6 L902.3 250.0 L893.1 247.0 L885.8 241.0 L878.0 235.0 L868.1 233.0 L860.2 227.1"/>
<path d="M927.9 290.2 L919.6 300.7 L910.0 309.7 L900.0 318.5 L893.5 325.6 L885.7 331.6 L880.1 339.8 L863.1 341.5"/>
<path d="M795.9 298.0 L806.1 306.1 L817.5 312.3 L828.9 318.5 L837.8 328.3 L844.3 339.8 L844.5 352.1 L844.9 364.3"/>
<path d="M771.5 282.5 L766.4 271.3"/>
<path d="M1092.3 355.9 L1084.2 345.9 L1080.1 333.7 L1073.6 322.8 L1078.5 314.7 L1079.7 305.0 L1084.9 297.1 L1094.9 293.8 L1104.2 289.2 L1113.4 284.2"/>
<path d="M1145.2 418.9 L1137.1 429.5 L1130.9 441.2 L1124.8 453.0 L1117.9 464.8 L1113.4 477.8 L1110.2 488.5 L1111.5 500.0 L1107.7 510.6 L1105.7 521.4 L1108.7 532.3 L1107.7 543.2"/>
<path d="M1145.2 418.9 L1133.3 412.2 L1120.5 407.5 L1107.7 403.0 L1096.3 401.8 L1084.9 403.0 L1073.0 406.4"/>
<path d="M1189.6 433.1 L1196.1 441.8 L1204.4 448.8 L1214.6 451.4 L1223.3 457.4 L1232.9 461.3"/>
<path d="M1099.2 548.0 L1113.4 547.2 L1123.1 549.2 L1131.9 554.3 L1141.8 555.3"/>
<path d="M1141.8 569.1 L1141.1 580.3 L1141.8 591.6 L1137.1 601.8 L1136.9 613.1 L1133.3 623.6 L1133.6 636.4 L1132.2 649.1"/>
<path d="M1132.2 649.1 L1132.9 658.7 L1129.3 668.0 L1129.3 677.5 L1125.0 686.7 L1119.1 694.9 L1108.4 697.3 L1097.5 696.4 L1086.6 697.2"/>
<path d="M1058.2 647.5 L1066.5 642.3 L1073.6 635.6 L1085.8 634.6 L1098.0 636.4"/>
<path d="M1077.5 483.5 L1076.1 493.9 L1076.6 504.5 L1073.6 514.7 L1078.7 524.0 L1088.3 529.8 L1092.0 540.3 L1099.2 548.0"/>
<path d="M1081.0 449.7 L1080.5 438.8 L1079.3 428.1 L1075.7 417.4 L1073.0 406.4"/>
<path d="M1020.7 356.7 L1009.0 360.9 L997.3 365.2"/>
<path d="M1020.7 356.7 L1028.8 365.2 L1038.3 372.3 L1045.1 382.1 L1055.5 388.9 L1062.3 399.9 L1073.0 406.4"/>
<path d="M1034.3 455.5 L1023.8 447.2 L1016.6 435.5 L1005.3 428.1 L1003.6 425.6"/>
<path d="M997.3 365.2 L986.8 371.0 L976.9 377.8 L967.1 383.8 L955.9 386.0 L945.6 390.5 L932.5 392.4 L922.2 401.9 L909.4 404.7 L897.2 408.9"/>
<path d="M959.8 531.0 L952.2 521.8 L942.7 514.7 L931.4 506.2 L923.6 494.2 L913.7 484.3"/>
<path d="M959.8 531.0 L947.2 535.8 L937.9 545.9 L925.6 551.3 L922.6 563.3 L920.0 575.5 L919.6 585.2 L918.3 594.8"/>
<path d="M970.6 513.8 L973.1 500.5 L969.2 487.0 L971.2 473.6 L965.8 463.1 L965.4 450.9 L959.8 440.6 L954.0 432.3 L948.4 423.9"/>
<path d="M900.6 458.0 L908.0 451.6 L913.8 443.8 L920.0 436.4 L929.5 432.4 L938.2 426.5 L948.4 423.9 L959.8 422.0 L971.2 424.4 L982.5 423.9 L993.2 423.5 L1003.6 425.6"/>
<path d="M889.8 575.5 L879.5 578.7 L868.8 579.5 L855.0 582.2 L841.1 579.4 L827.2 580.3"/>
<path d="M857.4 638.0 L867.4 636.0 L876.3 630.9 L885.8 627.6 L887.0 641.5 L888.7 655.4 L890.6 669.2 L889.8 683.1"/>
<path d="M857.4 638.0 L848.4 645.2 L842.3 655.0 L834.6 663.3 L823.2 664.7 L811.9 663.3 L805.0 664.1"/>
<path d="M944.4 665.7 L948.4 683.1 L945.6 690.9"/>
<path d="M918.3 594.8 L911.1 606.2 L908.2 619.4 L902.9 631.6 L896.8 644.1 L888.7 655.4"/>
<path d="M715.7 487.6 L724.1 482.8 L729.6 474.4 L737.9 469.5 L740.5 457.1 L743.6 444.7 L747.1 435.2 L746.8 424.8 L751.0 415.6"/>
<path d="M806.2 512.2 L802.9 501.3 L800.5 490.1 L798.5 480.2 L793.1 471.4 L792.0 461.3 L782.0 453.7 L777.6 441.1 L767.0 434.1 L757.5 426.3 L751.0 415.6"/>
<path d="M805.0 353.4 L794.0 352.0 L783.4 348.3 L776.1 336.6 L766.4 327.0 L768.7 316.0 L766.3 304.5 L771.8 293.8 L771.5 282.5"/>
<path d="M815.3 404.7 L822.9 398.1 L828.2 389.7 L834.6 382.1 L840.0 373.3 L844.9 364.3"/>
<path d="M845.4 438.9 L852.8 430.7 L857.0 420.4 L863.1 411.4 L868.8 407.2 L878.2 408.8 L887.8 406.6 L897.2 408.9"/>
<path d="M805.0 664.1 L804.8 674.4 L804.6 684.7 L806.2 694.9 L813.8 703.7 L823.2 710.5 L834.0 717.3 L843.2 726.2 L839.8 739.5 L835.8 752.5 L830.1 765.0"/>
<path d="M904.0 709.0 L906.5 721.4 L908.6 734.0 L908.6 749.5"/>
<path d="M961.5 735.5 L961.7 748.4 L959.8 761.2 L962.1 773.4 L961.5 785.9"/>
<path d="M1034.9 720.7 L1035.9 730.4 L1034.2 739.9 L1033.7 749.5 L1025.9 758.1 L1016.7 765.0 L1000.7 766.6"/>
<path d="M1000.7 766.6 L989.9 769.3 L982.1 778.2 L971.3 781.1 L961.5 785.9"/>
<path d="M979.7 675.2 L991.5 681.2 L999.9 691.8 L1011.0 698.8 L1018.5 706.6 L1028.2 712.0 L1034.9 720.7"/>
<path d="M1066.2 780.5 L1071.1 791.6 L1073.6 803.6 L1082.1 815.1 L1073.6 822.7 L1063.6 832.3 L1051.9 839.5"/>
<path d="M957.5 824.3 L953.8 835.3 L948.4 845.6 L946.7 860.8 L948.4 873.3 L948.4 885.8"/>
<path d="M911.4 808.2 L910.7 819.4 L908.6 830.4 L907.3 841.1 L908.6 851.7"/>
<path d="M817.6 817.4 L828.6 822.8 L840.3 826.6 L845.4 834.7 L851.0 842.4 L857.4 849.4 L865.6 856.4 L871.2 866.0 L880.1 872.2 L877.3 883.6"/>
<path d="M1014.4 843.4 L1022.4 857.0 L1033.6 859.0 L1044.6 862.4 L1059.9 864.6"/>
<path d="M1051.9 839.5 L1060.4 843.8 L1069.0 847.9 L1083.2 851.7 L1091.8 861.6 L1096.3 873.0 L1108.0 875.3 L1119.1 879.8"/>
<path d="M1018.4 906.2 L1004.2 900.9 L994.4 902.1 L985.1 906.1 L975.1 906.2"/>
<path d="M1068.4 896.4 L1058.6 897.7 L1048.9 899.4 L1039.4 902.4 L1029.0 904.9 L1018.4 906.2"/>
<path d="M749.3 716.8 L753.7 705.2 L760.7 694.9 L765.8 682.8 L772.0 671.2 L775.9 659.6 L777.7 647.5 L781.0 637.1 L786.3 627.6 L792.5 613.2"/>
<path d="M667.4 598.0 L675.8 602.3 L684.7 605.9 L692.4 611.6 L709.5 615.6 L720.8 603.6 L730.7 605.1 L739.3 610.6 L749.3 611.6 L758.5 608.4 L768.6 609.5 L777.7 606.0"/>
<path d="M693.0 662.5 L709.5 663.3 L720.8 671.2 L717.7 683.6 L716.9 696.4"/>
<path d="M632.1 674.4 L624.4 680.0 L619.8 688.6 L612.8 694.9 L613.7 704.7 L612.8 714.5 L610.6 723.8 L608.0 732.9 L604.2 741.8 L601.9 752.5 L600.2 763.3 L603.0 774.6 L599.1 785.1"/>
<path d="M550.7 674.4 L561.8 677.1 L572.9 679.1 L582.5 679.7 L591.7 683.4 L601.4 683.1 L611.1 678.3 L622.1 678.2 L632.1 674.4"/>
<path d="M516.6 715.2 L518.6 703.0 L521.7 690.9 L532.2 686.8 L540.2 678.3 L550.7 674.4"/>
<path d="M438.7 701.9 L444.0 693.9 L450.6 687.0 L460.6 682.0 L470.5 676.8 L476.7 667.3 L484.8 659.4 L484.9 649.5 L484.8 639.5 L485.8 626.8 L480.9 614.7 L481.3 602.0"/>
<path d="M406.2 598.8 L411.4 606.8 L418.8 612.6 L425.0 619.6 L436.1 625.5 L447.1 631.7 L459.2 635.6 L472.1 636.4 L484.8 639.5"/>
<path d="M369.8 653.8 L382.6 653.7 L395.3 653.8 L408.0 651.4 L416.0 656.4 L425.0 659.4 L433.5 668.6 L443.5 676.5 L450.6 687.0"/>
<path d="M565.5 620.4 L557.3 625.3 L550.2 631.6 L533.1 627.6 L531.5 616.5 L532.5 605.2"/>
<path d="M566.7 539.1 L558.0 548.9 L550.2 559.4 L538.4 563.7 L528.0 570.7"/>
<path d="M566.7 539.1 L575.1 547.6 L584.3 555.3 L592.5 561.8 L601.4 567.4 L611.6 565.9 L621.7 563.3 L632.1 563.4"/>
<path d="M632.1 563.4 L643.3 561.6 L653.3 556.2 L664.0 552.9 L674.2 556.2 L682.9 562.7 L692.4 567.4 L704.0 569.7 L715.2 573.9"/>
<path d="M622.4 494.2 L613.6 500.0 L605.4 506.7 L599.7 516.4 L590.0 521.2 L581.3 526.0 L574.4 533.0 L566.7 539.1"/>
<path d="M649.7 481.9 L653.5 493.8 L661.9 503.3 L666.8 514.7 L679.4 519.3 L692.4 522.8 L701.8 523.5 L711.2 522.0"/>
<path d="M540.5 496.7 L533.5 487.8 L523.0 482.6 L516.0 473.6 L504.7 470.6 L493.3 467.8 L481.0 470.2 L470.0 465.4"/>
<path d="M567.2 473.6 L578.6 486.0 L581.5 487.6"/>
<path d="M716.9 892.6 L717.7 902.3 L720.8 911.4 L728.6 920.9 L737.9 928.7 L749.4 924.6 L761.6 928.4 L773.3 926.2 L784.7 921.3 L796.9 925.1 L808.5 921.9"/>
<path d="M686.7 885.8 L681.0 902.4 L683.1 913.0 L685.6 923.4 L685.7 935.4 L685.6 947.4"/>
<path d="M631.0 869.9 L627.2 879.2 L627.9 889.4 L624.1 898.6 L618.6 908.1 L612.8 917.4 L612.7 926.8 L612.8 936.2"/>
<path d="M645.8 886.6 L658.3 898.6 L665.4 908.0 L672.5 917.4 L685.6 923.4"/>
<path d="M613.3 813.6 L629.8 811.3 L639.3 812.4 L648.8 811.7 L658.3 811.3 L664.0 811.3"/>
<path d="M707.8 768.1 L692.4 768.9 L681.1 766.6 L669.6 769.5 L658.3 768.1 L650.1 763.6 L641.2 761.2"/>
<path d="M749.3 776.6 L758.1 779.8 L766.4 784.3 L775.2 789.7 L785.4 792.0 L794.8 795.9"/>
<path d="M738.5 809.0 L747.9 807.8 L756.7 803.7 L766.4 803.6 L775.5 799.8 L785.8 800.1 L794.8 795.9 L806.0 798.4 L817.6 798.2"/>
<path d="M265.7 792.1 L254.3 790.3 L243.0 788.2 L232.8 782.0 L222.5 775.9"/>
<path d="M265.7 792.1 L271.2 783.9 L278.4 777.1 L282.8 768.1 L294.2 768.9"/>
<path d="M311.8 783.6 L299.9 795.9 L291.5 801.3 L284.4 808.4 L277.1 815.1 L265.7 818.9"/>
<path d="M387.5 860.1 L376.9 859.2 L366.9 855.9 L356.8 853.2 L347.1 853.4 L337.4 852.5 L329.9 858.4 L324.9 866.9 L316.9 872.2 L318.6 889.6"/>
<path d="M208.3 733.2 L220.2 741.8 L228.9 738.2 L237.3 734.0 L249.5 727.4 L260.0 718.4 L271.5 719.8 L282.8 722.3"/>
<path d="M179.3 705.8 L191.8 698.8 L200.5 693.5 L206.6 685.3 L214.5 679.1 L225.5 674.0 L237.3 671.2"/>
<path d="M135.4 760.4 L140.1 750.4 L141.2 739.5 L141.2 728.3 L146.3 718.4 L147.5 705.9 L143.3 693.9 L143.4 681.5"/>
<path d="M135.4 760.4 L143.7 755.2 L150.4 748.1 L157.6 741.8 L162.7 728.5 L173.4 718.6 L179.3 705.8"/>
<path d="M136.0 496.7 L146.8 497.3 L157.6 498.3 L171.9 506.5 L176.2 516.7 L180.4 526.9"/>
<path d="M149.1 461.3 L143.4 454.2 L137.7 447.2 L126.4 449.6 L114.9 446.7 L103.6 448.8 L100.7 432.2 L103.5 420.3 L104.7 408.1"/>
<path d="M149.1 461.3 L159.5 453.0 L171.3 446.3 L180.4 436.4 L190.0 437.1 L199.1 440.9 L208.8 440.6 L218.4 436.0 L228.7 433.9 L239.4 432.2 L249.8 435.5 L260.2 437.8 L270.8 436.4"/>
<path d="M151.4 397.2 L134.9 394.7 L124.4 391.6 L115.0 386.3 L112.1 371.9"/>
<path d="M245.8 352.5 L245.9 365.3 L243.0 377.8 L237.1 386.1 L231.6 394.7 L230.9 407.2 L231.6 419.7"/>
<path d="M316.4 309.1 L310.7 320.1 L310.5 332.8 L305.5 344.0 L307.7 356.6 L308.4 369.4 L316.8 375.2 L324.6 381.9 L334.0 386.3 L344.8 395.2 L357.7 400.5 L371.2 404.6 L381.8 413.9"/>
<path d="M392.6 318.5 L386.9 329.3 L383.2 340.9 L379.5 352.5 L378.5 362.5 L376.6 372.4 L373.8 382.1 L362.4 384.6"/>
<path d="M381.8 413.9 L392.0 412.4 L402.3 411.4 L413.4 416.2 L425.0 419.7 L431.8 411.9 L441.4 407.5 L448.9 400.5"/>
<path d="M317.5 451.3 L334.0 448.8 L344.1 447.3 L353.9 444.7"/>
<path d="M291.3 452.2 L282.8 457.1 L265.7 457.1"/>
<path d="M434.7 317.6 L437.9 329.1 L440.9 340.6 L442.1 352.5 L447.8 361.0"/>
<path d="M434.7 317.6 L423.8 310.0 L413.6 301.4 L402.3 302.7 L390.9 301.4"/>
<path d="M434.7 317.6 L434.5 306.5 L434.6 295.3 L436.4 284.2 L442.5 275.9 L447.8 267.0"/>
</g><g stroke="#e57f97" stroke-opacity=".55" stroke-width="1.5">
<path d="M-2.8 152.3 L10.2 154.3 L20.4 163.1 L32.2 167.9 L45.7 168.4 L55.9 177.3 L68.3 180.6 L79.5 185.1 L88.9 193.2 L102.0 193.5 L112.2 200.0 L121.7 208.1 L133.7 210.5 L146.2 216.7 L155.3 228.0 L169.4 231.7 L181.0 239.2 L191.8 247.9 L204.9 249.3 L216.0 256.8 L227.8 262.3 L240.7 264.4 L248.4 273.3 L258.7 279.1 L267.4 286.8 L280.3 291.0 L292.5 296.6 L302.9 306.3 L316.4 309.1 L328.7 313.6 L342.0 310.3 L354.6 312.8 L366.8 318.3 L380.1 315.0 L392.6 318.5 L403.1 319.9 L413.7 318.9 L424.1 315.4 L434.7 317.6"/>
<path d="M133.7 210.5 L139.1 221.8 L138.6 235.1 L146.8 245.5 L150.6 257.3 L153.1 269.6 L152.5 283.6 L158.6 296.4 L161.9 309.8 L162.2 323.6"/>
<path d="M-18.7 248.8 L-8.6 256.0 L4.5 256.4 L14.5 263.9 L25.7 268.7 L36.4 273.0 L43.9 282.0 L51.9 290.3 L64.1 292.6 L71.7 301.4 L84.8 300.4 L97.7 301.3 L110.4 306.3 L123.5 304.0 L134.3 306.6 L142.4 314.8 L151.8 320.0 L162.2 323.6 L174.0 329.7 L182.5 340.2 L193.5 347.4 L206.5 349.7 L219.9 347.0 L232.5 353.2 L245.8 352.5 L256.0 342.8 L269.8 338.8 L282.1 332.5 L291.3 321.1 L305.1 317.1 L316.4 309.1"/>
<path d="M68.3 180.6 L69.3 194.0 L66.2 207.5 L71.7 220.8 L70.4 234.3 L67.4 247.8 L72.9 261.1 L71.5 274.5 L68.6 288.1 L71.7 301.4 L76.5 313.0 L79.9 325.0 L82.5 337.2 L86.8 347.7 L90.5 358.4"/>
<path d="M27.9 237.5 L40.5 231.6 L54.4 230.9 L68.2 229.8 L80.2 221.4 L94.1 220.8 L107.9 219.6 L119.8 211.2 L133.7 210.5 L146.9 206.2 L161.3 207.9 L173.8 200.7 L187.3 197.9 L201.7 199.5 L214.5 193.8 L227.3 192.5 L239.9 190.8 L251.5 183.6 L264.6 184.1 L275.3 176.1 L288.2 172.3 L301.3 169.1 L310.8 158.6 L323.8 155.0"/>
<path d="M-14.7 207.0 L-4.5 215.3 L5.4 224.0 L19.0 227.5 L27.9 237.5"/>
<path d="M-18.7 248.8 L-15.6 238.6 L-19.0 227.7 L-15.6 217.4 L-14.7 207.0 L-11.0 193.5 L-6.7 180.1 L-8.6 165.4 L-2.8 152.3"/>
<path d="M181.5 134.6 L183.6 147.1 L180.9 160.0 L187.0 172.2 L187.0 184.9 L184.3 197.8 L190.4 210.0 L190.3 222.7 L187.7 235.6 L191.8 247.9"/>
<path d="M162.2 323.6 L170.2 313.8 L182.5 309.8 L192.7 302.8 L199.6 291.6 L212.0 287.6 L222.1 280.6 L229.1 269.4 L240.7 264.4"/>
<path d="M162.2 323.6 L149.4 328.8 L135.4 327.0 L122.1 328.7 L109.6 335.6 L95.6 333.7 L82.5 337.2 L76.1 346.7 L70.2 356.6 L59.5 362.9 L54.7 373.6 L50.6 386.4 L49.5 399.7"/>
<path d="M162.2 323.6 L159.4 336.0 L150.2 345.1 L144.2 355.9 L143.0 369.0 L134.9 378.7"/>
<path d="M122.9 171.8 L128.3 184.2 L127.9 198.2 L133.7 210.5"/>
<path d="M181.5 134.6 L175.7 145.9 L166.7 155.3 L162.2 167.4 L154.9 178.0 L145.9 187.6 L143.1 201.2 L133.7 210.5"/>
<path d="M68.3 180.6 L81.9 177.8 L96.1 179.0 L108.9 171.8 L122.9 171.8 L135.8 168.5 L149.4 171.1 L162.2 167.4"/>
<path d="M193.5 347.4 L194.1 359.3 L195.8 371.1 L184.2 376.8 L175.1 386.7 L161.5 388.9 L151.4 397.2 L156.1 408.1 L158.2 419.7 L155.7 430.1 L151.6 440.1 L153.7 451.4 L149.1 461.3 L144.8 473.1 L138.5 484.2 L136.0 496.7 L134.6 509.6 L134.6 522.7 L127.7 534.8 L128.6 548.0 L128.5 560.8 L124.4 573.3 L128.9 586.3 L126.4 598.9 L125.2 611.6"/>
<path d="M151.4 397.2 L140.4 402.6 L127.6 400.7 L116.2 404.6 L104.7 408.1 L91.1 404.8 L76.7 406.8 L63.6 399.9 L49.5 399.7"/>
<path d="M245.8 352.5 L252.2 363.7 L252.1 376.7 L254.6 389.0 L262.9 399.6 L262.8 412.7 L265.4 425.0 L270.8 436.4 L280.1 445.5 L291.3 452.2 L276.0 461.3 L268.9 473.1 L264.7 486.5 L256.1 497.5 L260.6 510.6"/>
<path d="M434.7 317.6 L429.0 330.2 L423.1 342.6 L412.2 352.3 L409.2 366.3 L403.2 378.7 L392.4 388.4 L389.4 402.4 L381.8 413.9 L371.4 420.7 L358.9 423.9 L350.8 434.6 L339.2 439.3 L326.8 442.7 L317.5 451.3 L304.4 452.3 L291.3 452.2"/>
<path d="M316.4 309.1 L321.1 322.3 L332.6 331.4 L339.0 343.5 L342.9 357.2 L354.4 366.3 L360.8 378.5 L364.8 392.2 L376.2 401.2 L381.8 413.9 L385.3 424.6 L385.3 436.2 L392.7 445.8 L393.7 457.1 L381.3 461.5 L373.0 472.2 L362.1 478.9 L348.9 482.0 L340.5 492.8 L328.9 498.3 L320.8 509.7 L311.8 520.4 L303.8 528.3 L293.1 532.1 L284.5 539.1"/>
<path d="M381.8 413.9 L373.8 423.1 L363.6 430.2 L356.8 440.6 L343.5 443.7 L331.2 450.0 L317.5 451.3"/>
<path d="M291.3 452.2 L298.2 461.9 L304.7 472.0 L316.1 478.0 L320.7 489.6 L328.9 498.3 L341.1 500.0 L352.1 506.8 L365.2 504.9 L376.9 508.5 L387.9 515.2 L401.0 513.2 L412.5 517.9 L424.7 521.8 L436.2 527.1 L445.9 536.5 L459.3 537.6 L470.8 543.0 L480.5 552.3 L494.0 553.4 L505.5 558.9 L515.2 568.1 L528.0 570.7 L540.5 575.6 L554.4 572.6 L567.0 576.9 L579.6 582.1 L593.4 579.2 L606.0 583.5 L619.0 586.0 L630.4 591.9 L643.5 590.8 L655.7 593.4 L667.4 598.0"/>
<path d="M-59.1 577.9 L-48.5 571.9 L-36.7 567.8 L-28.7 557.2 L-16.7 553.5 L-6.2 547.2 L4.6 546.9 L15.5 548.4 L26.2 546.4 L34.5 538.8 L45.6 535.0 L53.5 526.9 L64.7 529.4 L73.9 536.8 L84.8 539.9 L95.5 543.4 L106.5 545.1 L118.2 543.4 L128.6 548.0 L141.3 548.1 L153.8 552.1 L166.7 547.6 L179.3 550.5 L189.6 547.5 L199.7 544.0 L211.2 536.2 L223.7 530.0 L233.9 520.4 L243.3 518.4 L251.7 514.0 L260.6 510.6 L268.4 518.5 L279.2 522.7 L286.8 531.0"/>
<path d="M26.2 546.4 L34.7 553.5 L38.5 564.6 L48.1 570.7 L54.7 579.5 L68.0 584.1 L78.2 594.2 L91.1 599.6 L103.0 602.0 L113.9 607.4 L125.2 611.6 L136.4 618.8 L148.5 624.4 L148.6 635.9 L143.5 647.0 L147.3 658.8 L145.5 670.2 L143.4 681.5 L153.8 685.4 L160.8 694.4 L169.4 701.1 L179.3 705.8 L184.8 716.7 L183.4 729.1 L185.3 740.8 L192.6 751.3 L192.3 763.5 L198.3 775.7 L201.8 788.7 L202.2 802.7 L211.0 814.0 L213.4 827.3 L224.8 834.7 L238.3 836.5 L251.4 839.4 L262.9 846.4 L273.9 851.3 L280.1 862.5 L290.4 868.5 L301.8 872.9 L308.0 884.2 L318.6 889.6 L315.2 906.2 L324.2 911.1 L333.4 915.7 L343.1 918.9"/>
<path d="M148.5 624.4 L160.7 629.1 L170.6 638.5 L184.3 639.8 L195.7 646.2 L205.5 655.5 L218.5 658.6 L227.6 668.1 L241.2 671.1 L250.8 680.0 L259.7 689.9 L272.0 694.9 L280.3 706.3 L281.5 721.0 L288.3 733.2 L297.4 744.4 L298.5 759.1 L305.4 771.2 L311.8 783.6 L319.8 794.6 L332.8 800.7 L339.6 812.9 L348.2 823.3 L361.2 829.3 L367.9 841.6 L376.6 851.9 L387.5 860.1 L398.3 864.8 L407.8 871.9 L417.6 878.3 L428.8 881.4 L440.1 883.5 L452.2 881.2 L463.1 885.8 L467.7 898.3 L471.3 911.1 L481.1 921.4 L483.6 934.7"/>
<path d="M26.2 546.4 L26.1 558.8 L19.1 570.0 L20.8 582.7 L19.8 595.0 L12.8 606.2 L14.5 618.9 L11.4 630.8 L20.8 637.3 L31.1 641.8 L43.1 642.9 L51.2 652.1 L62.1 655.4 L70.5 662.7 L76.9 672.2 L88.3 676.3 L95.1 685.4 L89.9 698.8"/>
<path d="M-59.1 577.9 L-46.1 581.3 L-33.5 586.8 L-19.2 585.0 L-6.8 590.8 L-1.3 600.4 L3.8 610.1 L4.5 621.9 L11.4 630.8"/>
<path d="M-6.8 590.8 L5.3 587.4 L17.5 584.5 L30.6 587.0 L42.2 580.6 L54.7 579.5 L59.8 567.8 L71.2 560.8 L78.2 550.5 L84.8 539.9"/>
<path d="M95.1 685.4 L107.2 684.8 L119.4 685.7 L131.1 679.8 L143.4 681.5"/>
<path d="M91.1 599.6 L87.4 611.9 L79.8 622.1 L71.2 631.8 L70.0 645.4 L62.1 655.4"/>
<path d="M213.4 827.3 L225.4 822.6 L234.1 812.9 L243.5 804.2 L256.8 801.4 L265.7 792.1 L277.2 789.5 L289.2 790.4 L299.9 783.5 L311.8 783.6"/>
<path d="M213.4 827.3 L201.3 820.1 L187.5 817.4 L174.7 812.0"/>
<path d="M318.6 889.6 L328.0 892.3 L336.1 897.6 L344.8 901.7 L356.2 895.5 L369.0 893.5 L382.1 892.6 L392.6 883.8 L405.4 881.8 L417.6 878.3"/>
<path d="M315.2 906.2 L325.2 905.4 L335.1 904.2 L344.8 901.7"/>
<path d="M148.5 624.4 L152.6 611.6 L161.5 600.9 L162.2 586.7 L168.0 574.7 L176.9 563.9 L179.3 550.5"/>
<path d="M199.7 544.0 L201.0 530.1 L204.1 516.4 L203.1 502.4 L203.1 486.0"/>
<path d="M20.0 517.9 L21.7 527.5 L25.7 536.6 L26.2 546.4"/>
<path d="M16.5 486.8 L16.3 497.3 L18.4 507.6 L20.0 517.9"/>
<path d="M-10.8 387.9 L1.1 385.4 L13.3 389.1 L25.0 384.2 L37.0 384.6 L43.8 391.7 L49.5 399.7"/>
<path d="M37.0 384.6 L40.7 396.2 L42.6 408.2 L40.6 420.8 L45.6 432.2 L42.0 444.3 L31.6 452.8 L28.3 465.1 L24.6 477.1 L16.5 486.8"/>
<path d="M311.8 520.4 L318.4 531.8 L319.5 545.1 L324.9 556.9"/>
<path d="M412.5 517.9 L405.1 527.4 L397.0 536.0 L388.0 544.0 L375.1 544.9 L362.5 547.9 L350.8 554.7 L337.2 552.6 L324.9 556.9"/>
<path d="M388.0 544.0 L382.8 555.4 L379.7 567.4 L380.2 580.5 L373.8 591.6 L373.0 604.0 L369.7 616.3 L374.1 629.1 L370.5 641.4 L369.8 653.8 L380.8 662.6 L391.6 671.5 L405.9 675.5 L415.2 686.6 L426.0 695.5 L438.7 701.9 L451.2 707.2 L459.7 718.7 L472.8 723.0 L485.0 728.8 L495.0 737.9"/>
<path d="M412.5 517.9 L416.4 507.3 L421.6 497.2 L430.3 489.0 L433.0 477.8 L446.0 475.6 L457.0 467.7 L470.0 465.4 L480.6 458.4 L491.4 451.7 L498.5 440.0 L510.9 435.3 L521.7 428.6 L528.8 416.9 L541.2 412.3 L550.7 403.9 L559.2 396.7 L567.6 389.4 L579.2 386.5 L586.6 377.8"/>
<path d="M434.7 317.6 L445.5 323.0 L456.1 328.7 L463.9 339.1 L476.2 341.9 L486.8 347.6 L494.6 358.0 L506.4 361.8 L519.4 366.3 L533.7 364.2 L546.2 371.0 L559.5 374.2 L573.8 372.2 L586.6 377.8"/>
<path d="M434.7 317.6 L445.3 318.0 L455.9 318.6 L466.0 324.0 L476.8 322.8 L481.9 334.3 L492.4 341.6 L500.4 351.0 L506.4 361.8"/>
<path d="M476.8 322.8 L475.6 309.1 L467.6 297.5 L462.8 284.9 L463.4 270.7 L455.4 259.1 L450.7 246.5 L448.3 233.2 L437.6 226.7 L424.6 227.6 L413.2 223.2 L402.8 215.7 L390.3 214.9 L382.6 204.3 L371.1 198.0 L360.2 191.0 L354.1 178.6 L342.5 172.4 L331.7 165.3 L323.8 155.0"/>
<path d="M448.3 233.2 L459.5 226.6 L465.3 214.4 L474.9 206.2 L484.8 198.2 L497.3 196.1 L508.6 190.3 L519.3 182.9 L532.9 183.5 L543.9 177.1 L550.6 167.7 L562.4 163.9 L568.6 154.0 L575.5 144.8 L585.4 139.0 L599.1 141.7 L610.7 150.7 L625.1 151.2 L637.8 156.8 L649.9 155.5 L661.7 157.9 L673.4 162.3 L685.7 158.1 L697.5 161.2 L709.1 163.4 L720.4 157.8 L732.0 159.2 L743.6 161.8 L755.0 158.5"/>
<path d="M323.8 155.0 L337.3 154.4 L350.7 152.8 L363.4 146.3 L377.4 148.7 L390.8 147.0 L404.0 143.5"/>
<path d="M476.8 322.8 L487.9 314.1 L493.6 300.9 L501.8 289.8 L514.3 282.3 L520.0 269.1 L529.7 259.2 L539.8 252.3 L551.0 246.8 L558.0 235.5 L569.5 230.6"/>
<path d="M569.5 230.6 L581.8 235.3 L595.2 232.2 L607.6 236.1 L619.8 241.2 L633.3 238.1 L645.6 242.2 L658.3 244.5 L671.6 246.6 L684.8 249.1 L698.7 245.5 L711.7 249.7 L711.4 261.8 L712.9 273.9"/>
<path d="M476.8 322.8 L488.6 322.9 L498.8 316.2 L509.8 312.8 L522.1 314.7 L532.5 309.1 L544.4 304.6 L557.1 302.2 L567.1 292.7 L580.0 290.8 L591.7 285.9 L592.8 272.2"/>
<path d="M586.6 377.8 L596.3 386.0 L600.7 398.1 L607.1 408.7 L618.5 415.6 L623.6 427.2 L631.3 437.0 L633.6 449.3 L637.2 461.0 L647.1 469.7 L649.7 481.9 L639.9 484.4 L631.8 490.8 L622.4 494.2 L623.0 508.2 L624.7 522.1 L631.2 535.3 L628.7 549.8 L632.1 563.4 L639.0 574.0 L649.9 580.5 L660.2 587.6 L667.4 598.0 L672.9 610.8 L679.8 623.0 L680.1 637.8 L688.3 649.4 L693.0 662.5 L701.1 672.9 L713.8 678.5 L720.3 690.5 L729.3 700.0 L742.0 705.6 L749.3 716.8 L752.2 729.5 L752.1 742.5 L753.1 754.1 L748.7 765.1 L749.3 776.6 L747.0 787.8 L740.2 797.5 L738.5 809.0 L730.3 813.6 L722.6 818.9 L730.2 825.1 L734.6 834.3 L742.5 840.3 L752.7 847.2 L757.1 859.6 L766.8 866.9 L777.2 873.7 L783.4 884.3 L791.6 892.4 L793.9 904.5 L802.3 912.5 L808.5 921.9"/>
<path d="M649.7 481.9 L660.7 486.1 L672.7 485.4 L683.9 488.5 L694.5 488.4 L705.1 486.2 L715.7 487.6 L712.4 498.9 L714.5 510.8 L711.2 522.0 L723.6 526.0 L736.9 523.9 L749.3 527.7 L759.9 521.8 L772.5 523.3 L783.7 519.4 L794.0 512.5 L806.2 512.2 L818.1 512.2 L830.1 512.5 L841.5 518.4 L853.7 515.5 L865.6 515.8 L877.3 518.7"/>
<path d="M918.3 594.8 L928.7 603.0 L941.7 606.0 L954.3 609.8 L963.7 620.2 L976.7 623.2 L988.2 629.2 L1002.0 629.0 L1015.8 629.1 L1029.2 634.8 L1043.2 631.6 L1057.0 631.9 L1070.4 637.5 L1084.4 634.3 L1098.0 636.4 L1108.7 642.6 L1121.3 643.4 L1132.2 649.1"/>
<path d="M988.2 629.2 L985.8 615.7 L983.7 602.2 L983.7 588.4"/>
<path d="M586.6 377.8 L587.6 389.5 L582.7 400.4 L580.0 411.5 L580.3 423.1 L577.1 435.7 L571.2 447.7 L573.0 461.6 L567.2 473.6 L566.1 483.5 L565.5 493.3 L566.1 503.2"/>
<path d="M586.6 377.8 L598.5 379.6 L607.9 387.5 L618.2 393.2 L630.9 393.1 L640.3 401.0 L651.4 404.7"/>
<path d="M586.6 377.8 L597.6 368.9 L611.7 365.8 L624.7 360.7 L634.8 349.8 L648.8 346.8 L661.8 341.6 L671.9 330.8 L685.6 327.0 L699.5 327.4 L712.3 333.2 L725.1 338.4 L739.1 338.9"/>
<path d="M685.6 327.0 L697.1 334.8 L704.8 346.5 L712.8 357.8 L726.2 363.7 L733.9 375.3"/>
<path d="M566.7 539.1 L556.3 546.1 L549.2 557.2 L536.5 561.3 L528.0 570.7 L527.6 582.4 L532.7 593.5 L532.5 605.2 L532.0 616.3 L525.1 625.8 L525.1 637.0 L522.3 647.5 L533.3 654.8 L540.1 666.6 L550.7 674.4 L541.5 684.0 L535.9 696.7 L523.6 703.7 L516.6 715.2"/>
<path d="M749.3 716.8 L763.1 718.7 L775.3 725.6 L788.5 729.3 L799.4 740.2 L809.6 748.5 L821.1 755.2 L830.1 765.0 L840.3 773.8 L853.8 776.5 L865.8 781.8 L875.2 792.3 L888.7 794.9 L900.7 800.3 L911.4 808.2 L923.3 801.1 L935.9 795.8 L950.2 794.2 L961.5 785.9 L973.6 782.0 L986.3 785.0 L998.8 784.9 L1011.0 782.0 L1024.8 781.7 L1038.5 778.6 L1052.4 783.4 L1066.2 780.5"/>
<path d="M911.4 808.2 L923.5 810.7 L934.9 815.0 L945.0 823.0 L957.5 824.3 L969.5 826.3 L979.3 834.7 L992.0 834.7 L1003.6 837.8 L1014.4 843.4 L1026.2 847.7 L1035.9 856.7 L1049.3 857.6 L1059.9 864.6 L1067.6 871.6 L1077.7 875.3 L1084.9 882.8 L1097.8 885.8 L1110.5 889.6 L1124.1 893.5 L1138.4 890.8 L1152.1 894.1 L1163.3 896.2 L1172.5 904.2 L1184.6 903.7 L1195.4 907.0 L1205.5 912.2"/>
<path d="M830.1 765.0 L814.1 772.0 L815.6 783.3 L817.8 794.5 L814.1 806.2 L817.6 817.4 L819.6 829.9 L827.8 840.5 L827.5 853.8 L832.4 865.4 L837.5 876.9 L843.2 888.1 L834.4 896.5 L827.6 906.8 L815.4 911.7 L808.5 921.9"/>
<path d="M808.5 921.9 L819.6 916.0 L832.3 915.9 L844.7 914.5 L855.2 906.3 L867.9 906.3 L880.3 904.8 L891.5 899.4 L899.9 893.0 L910.6 890.7 L919.4 885.1 L929.1 884.1 L938.7 887.3 L948.4 885.8 L958.1 891.6 L966.7 898.8 L975.1 906.2"/>
<path d="M1091.2 725.4 L1080.1 722.1 L1068.7 723.1 L1057.2 725.3 L1046.3 719.2 L1034.9 720.7"/>
<path d="M830.1 765.0 L842.2 760.5 L851.7 751.4 L863.1 745.6 L874.4 734.0"/>
<path d="M722.6 818.9 L709.4 819.7 L696.4 818.2 L693.0 834.2"/>
<path d="M609.9 870.7 L620.5 871.2 L631.0 869.9"/>
<path d="M707.8 768.1 L701.4 776.7 L697.2 786.4 L692.4 795.9 L682.0 799.3 L673.9 806.9 L664.0 811.3"/>
<path d="M484.8 572.3 L485.2 582.4 L481.0 591.9 L481.3 602.0"/>
<path d="M870.5 176.2 L858.7 174.1 L847.1 171.6 L834.7 175.0 L823.2 170.9 L809.8 167.2 L796.2 164.3 L781.8 166.4 L768.9 159.7 L755.0 158.5"/>
<path d="M1152.1 894.1 L1153.2 879.8"/>
<path d="M1110.5 889.6 L1121.1 885.8 L1130.5 879.8 L1141.8 880.6 L1153.2 879.8"/>
<path d="M1051.9 839.5 L1055.8 852.1 L1059.9 864.6"/>
<path d="M1068.4 896.4 L1077.0 890.0 L1084.9 882.8"/>
<path d="M1018.4 906.2 L1031.0 904.2 L1042.9 898.5 L1056.4 901.1 L1068.4 896.4"/>
<path d="M1014.4 843.4 L1016.3 855.8 L1013.0 868.7 L1018.7 880.9 L1018.6 893.5 L1018.4 906.2 L1018.8 917.2 L1021.7 928.0 L1020.7 939.2"/>
<path d="M1168.6 921.2 L1180.5 916.6 L1193.7 917.3 L1205.5 912.2"/>
<path d="M1168.6 921.2 L1166.1 933.2 L1158.6 943.4 L1156.6 955.6"/>
<path d="M68.3 180.6 L68.3 168.5 L71.1 156.5 L69.5 144.3 L62.9 134.8 L60.5 123.3 L55.2 113.1 L51.2 101.5 L52.3 89.0 L49.5 77.2"/>
<path d="M85.4 157.7 L90.0 147.7 L92.2 137.0 L95.1 126.5 L100.0 115.7 L105.3 105.0 L112.1 95.2 L118.5 84.2 L123.5 72.6"/>
<path d="M122.9 171.8 L122.6 161.0 L127.0 150.7 L126.3 139.9 L122.4 129.8 L122.5 118.6 L117.8 108.6"/>
<path d="M181.5 134.6 L178.6 123.1 L179.0 110.9 L174.7 99.7 L179.2 86.5 L180.4 72.6"/>
<path d="M181.5 134.6 L192.0 125.7 L203.1 117.6 L210.6 108.5 L219.5 101.1 L230.6 96.1 L237.3 86.2"/>
<path d="M85.4 157.7 L97.3 164.0 L110.2 167.5 L122.9 171.8"/>
<path d="M68.3 180.6 L73.7 172.8 L81.0 166.3 L85.4 157.7"/>
<path d="M68.3 180.6 L60.7 192.3 L49.9 201.7 L45.9 216.1 L36.4 226.4 L27.9 237.5 L28.8 248.0 L26.3 258.3 L25.7 268.7 L25.5 281.8 L19.8 293.6 L15.0 305.5 L17.3 319.1 L11.5 330.9 L6.7 342.9 L6.3 355.9"/>
<path d="M25.7 268.7 L21.7 277.6 L14.9 284.7 L9.7 292.8 L11.2 305.5 L9.1 318.1 L4.8 330.5 L9.2 343.4 L6.3 355.9 L2.5 367.6 L-5.9 376.8 L-10.8 387.9"/>
<path d="M71.7 301.4 L77.0 312.3 L80.5 323.8 L80.2 336.6 L88.3 346.5 L90.5 358.4 L102.1 363.9 L112.1 371.9"/>
<path d="M-2.8 152.3 L-5.8 141.5 L-2.4 130.4 L-2.7 119.5 L-4.5 108.6 L-2.9 96.7 L-1.1 84.8 L-1.7 72.6"/>
<path d="M-2.8 152.3 L6.1 144.9 L17.4 141.9 L26.8 135.4 L33.4 127.0 L43.2 121.9 L49.5 113.1"/>
<path d="M323.8 155.0 L319.5 145.1 L314.5 135.6 L305.7 128.2 L302.7 117.6 L300.3 107.0 L295.2 97.1 L294.2 86.2"/>
<path d="M323.8 155.0 L333.6 146.2 L342.9 136.9 L351.1 126.5 L353.2 114.1 L358.3 102.5 L362.4 90.7"/>
<path d="M323.8 155.0 L312.2 152.0 L300.4 149.7 L288.5 148.8 L276.7 149.9 L266.0 144.0 L254.5 143.1 L243.0 142.6 L232.2 148.3 L219.5 148.9 L208.8 155.0"/>
<path d="M323.8 155.0 L325.7 167.3 L328.5 179.4 L336.2 190.1 L335.2 203.2 L339.7 214.9 L333.2 226.6 L331.5 240.0 L326.6 252.3"/>
<path d="M404.0 143.5 L410.9 151.7 L421.8 155.3 L427.9 164.6 L436.4 170.9 L447.1 180.3 L461.6 182.7 L473.1 190.7 L484.8 198.2"/>
<path d="M448.3 233.2 L446.1 244.4 L449.2 255.7 L447.8 267.0 L444.1 279.5 L443.9 293.0 L435.7 304.4 L434.7 317.6"/>
<path d="M484.8 198.2 L478.9 206.0 L475.0 215.0 L470.5 223.6 L458.9 227.1 L448.3 233.2"/>
<path d="M585.4 139.0 L573.2 136.4 L563.3 127.6 L550.2 127.3 L538.4 123.5 L527.4 117.6 L516.7 111.7 L508.7 102.3 L499.0 95.2 L490.8 86.0 L479.7 80.5 L470.5 72.6"/>
<path d="M585.4 139.0 L583.4 127.6 L588.0 116.0 L583.5 104.6 L582.8 93.2 L584.3 81.7"/>
<path d="M637.8 156.8 L637.2 143.6 L639.5 130.6 L641.2 117.6 L650.9 110.5 L656.3 98.9 L667.6 93.5 L675.3 84.4"/>
<path d="M585.4 139.0 L587.4 151.9 L584.3 165.1 L587.2 178.0 L581.5 190.7 L581.2 205.2 L572.3 216.9 L569.5 230.6"/>
<path d="M755.0 158.5 L764.7 160.2 L774.1 163.1 L783.4 166.5 L794.8 165.7 L806.2 165.3 L817.6 166.5"/>
<path d="M586.6 377.8 L596.7 372.2 L608.4 372.2 L619.5 370.2 L629.8 365.2 L642.4 358.7 L656.9 358.4 L669.6 352.5 L680.7 347.7 L692.8 348.1 L704.8 348.2 L715.4 340.8 L727.5 341.4 L739.1 338.9"/>
<path d="M586.6 377.8 L590.0 368.5 L596.8 361.2 L601.4 352.5 L594.7 342.5 L590.0 331.3"/>
<path d="M651.4 404.7 L663.2 401.2 L674.5 396.2 L686.7 394.7 L699.6 392.5 L709.9 384.1 L721.4 378.4 L733.9 375.3"/>
<path d="M506.4 361.8 L499.2 369.3 L495.3 379.2 L487.6 386.3 L475.5 391.3 L464.8 398.8 L448.9 400.5"/>
<path d="M586.6 377.8 L583.6 386.7 L578.6 394.7 L580.5 404.0 L578.2 413.7 L580.3 423.1"/>
<path d="M-59.1 577.9 L-55.0 567.7 L-49.6 558.1 L-47.2 547.2 L-58.3 540.3 L-68.7 532.4 L-78.5 523.6"/>
<path d="M11.4 630.8 L2.7 620.6 L-7.3 611.6 L-5.9 601.2 L-6.8 590.8 L-9.2 578.1 L-11.1 565.4 L-7.6 552.2 L-13.0 539.8 L-13.0 526.9"/>
<path d="M26.2 546.4 L18.2 537.5 L14.3 525.7 L5.7 517.1"/>
<path d="M159.9 539.1 L158.9 526.9 L157.6 514.7"/>
<path d="M233.9 520.4 L223.6 505.7 L213.4 508.4 L203.1 511.4"/>
<path d="M318.6 889.6 L327.2 897.1 L334.0 906.2 L343.1 918.9 L352.4 926.3 L363.6 930.3 L373.8 936.2 L384.3 943.7 L393.3 953.0 L402.3 962.3 L406.6 974.1 L413.6 984.5"/>
<path d="M11.4 630.8 L-1.7 634.3 L-14.2 639.5 L-21.7 651.2 L-33.2 659.7 L-39.8 672.0 L-51.8 676.4 L-64.2 679.1"/>
<path d="M-59.1 577.9 L-61.3 591.5 L-65.6 604.8 L-62.4 619.2 L-67.1 632.4"/>
<path d="M-59.1 577.9 L-72.2 575.9 L-85.0 572.2 L-98.4 572.3"/>
<path d="M26.2 546.4 L38.2 555.3 L44.4 562.9 L47.7 572.5 L54.7 579.5"/>
<path d="M84.8 539.9 L79.6 550.0 L75.6 560.6 L72.3 571.5 L63.5 575.6 L54.7 579.5"/>
<path d="M125.2 611.6 L116.0 609.0 L106.4 607.6"/>
<path d="M143.4 681.5 L129.2 675.2 L119.7 676.6 L110.2 675.3 L100.7 675.2 L95.1 685.4"/>
<path d="M89.9 698.8 L92.8 709.0 L97.9 718.4 L99.9 730.3 L103.6 741.8"/>
<path d="M213.4 827.3 L206.0 834.2 L200.3 836.5"/>
<path d="M213.4 827.3 L220.2 834.2"/>
<path d="M463.1 885.8 L463.7 896.0 L464.8 906.2 L472.3 914.9 L475.7 926.3 L483.6 934.7"/>
<path d="M417.6 878.3 L428.8 881.4 L440.1 883.5 L452.2 881.2 L463.1 885.8"/>
<path d="M1152.1 894.1 L1164.6 894.9 L1173.7 899.6 L1181.7 906.2 L1193.4 909.9 L1205.5 912.2"/>
<path d="M1110.5 889.6 L1123.3 891.8 L1136.1 891.1 L1152.1 894.1"/>
<path d="M1084.9 882.8 L1067.9 882.0 L1063.9 873.4 L1059.9 864.6"/>
<path d="M667.4 598.0 L664.0 615.6 L669.9 627.5 L675.3 639.5 L681.3 647.1 L688.2 654.0 L693.0 662.5"/>
<path d="M632.1 563.4 L624.2 572.7 L618.4 583.6 L619.0 586.0"/>
<path d="M667.4 598.0 L652.6 607.6 L646.8 618.2 L639.6 628.0 L635.5 639.5 L640.0 652.0 L646.9 663.3 L661.1 672.0"/>
<path d="M412.5 517.9 L419.3 502.4 L424.6 494.6 L427.0 485.2 L433.0 477.8"/>
<path d="M412.5 517.9 L424.4 518.8 L436.1 521.0 L447.0 527.5 L459.2 526.9 L471.8 533.3 L482.0 543.1 L493.3 551.3 L505.3 556.9 L517.1 562.9 L528.0 570.7"/>
<path d="M328.9 498.3 L322.5 488.3 L316.9 477.8 L305.5 465.4"/>
<path d="M393.7 457.1 L403.9 456.3 L413.6 453.0 L426.2 456.6 L439.2 457.1 L449.7 459.1 L459.2 464.5 L470.0 465.4"/>
<path d="M830.1 765.0 L839.2 756.3 L846.0 745.6 L857.7 738.3 L868.8 730.1"/>
<path d="M830.1 765.0 L834.6 776.6 L826.8 788.0 L817.6 798.2 L818.6 807.8 L817.6 817.4"/>
<path d="M722.6 818.9 L716.7 827.2 L709.5 834.2 L702.1 826.8 L696.4 818.2"/>
<path d="M808.5 921.9 L796.1 924.8 L783.4 924.9 L772.7 930.9 L765.6 941.3 L755.0 947.4"/>
<path d="M808.5 921.9 L797.7 913.3 L789.1 902.4 L785.3 893.7 L783.4 884.3"/>
<path d="M877.3 518.7 L867.3 512.7 L857.4 506.5 L844.3 496.7 L849.1 487.7 L851.7 477.8 L853.8 466.6 L856.2 455.5"/>
<path d="M856.2 455.5 L848.8 444.7 L845.4 438.9 L828.9 432.2"/>
<path d="M988.2 629.2 L978.4 624.0 L968.6 618.5 L959.8 611.6 L950.4 604.9 L938.6 604.4 L928.1 600.3 L918.3 594.8"/>
<path d="M749.3 527.7 L766.4 522.8 L779.3 517.9 L792.7 514.8 L806.2 512.2"/>
<path d="M988.2 629.2 L990.6 618.3 L993.9 607.6 L989.5 597.6 L983.7 588.4"/>
<path d="M631.0 869.9 L625.8 859.0 L618.4 849.4 L624.1 834.2"/>
<path d="M631.0 869.9 L637.5 879.0 L645.8 886.6"/>
<path d="M599.1 785.1 L593.3 797.8 L590.0 811.3"/>
<path d="M550.7 674.4 L538.8 667.3 L530.6 657.3 L522.3 647.5"/>
<path d="M481.3 602.0 L493.0 600.5 L504.4 603.8 L516.0 603.6 L532.5 605.2"/>
<path d="M596.3 602.8 L601.4 591.6 L610.4 589.4 L619.0 586.0"/>
</g></g>
<g font-family="Liberation Sans, DejaVu Sans, sans-serif" stroke-linejoin="round">
<circle cx="68.1" cy="181.1" r="2" fill="#fff" fill-opacity=".8" stroke="#777" stroke-width="0.9"/>
<circle cx="133.6" cy="210.7" r="3.2" fill="#fff" fill-opacity=".9" stroke="#777" stroke-width="1.1"/>
<circle cx="264.1" cy="184.5" r="2" fill="#fff" fill-opacity=".8" stroke="#777" stroke-width="0.9"/>
<circle cx="323.2" cy="154.6" r="3.4" fill="#f2efe9" stroke="#555" stroke-width="1.1"/><circle cx="323.2" cy="154.6" r="1.4" fill="#555"/>
<circle cx="153.4" cy="271.1" r="2" fill="#fff" fill-opacity=".8" stroke="#777" stroke-width="0.9"/>
<circle cx="123.2" cy="304.0" r="2" fill="#fff" fill-opacity=".8" stroke="#777" stroke-width="0.9"/>
<circle cx="162.1" cy="324.1" r="3.2" fill="#fff" fill-opacity=".9" stroke="#777" stroke-width="1.1"/>
<circle cx="245.6" cy="353.3" r="2" fill="#fff" fill-opacity=".8" stroke="#777" stroke-width="0.9"/>
<circle cx="327.2" cy="250.9" r="2" fill="#fff" fill-opacity=".8" stroke="#777" stroke-width="0.9"/>
<circle cx="1.0" cy="378.5" r="2" fill="#fff" fill-opacity=".8" stroke="#777" stroke-width="0.9"/>
<circle cx="400.7" cy="159.7" r="2" fill="#fff" fill-opacity=".8" stroke="#777" stroke-width="0.9"/>
<circle cx="543.0" cy="177.1" r="2" fill="#fff" fill-opacity=".8" stroke="#777" stroke-width="0.9"/>
<circle cx="569.5" cy="230.8" r="2" fill="#fff" fill-opacity=".8" stroke="#777" stroke-width="0.9"/>
<circle cx="434.6" cy="318.7" r="3.4" fill="#f2efe9" stroke="#555" stroke-width="1.1"/><circle cx="434.6" cy="318.7" r="1.4" fill="#555"/>
<circle cx="476.9" cy="323.4" r="3.4" fill="#f2efe9" stroke="#555" stroke-width="1.1"/><circle cx="476.9" cy="323.4" r="1.4" fill="#555"/>
<circle cx="506.8" cy="362.3" r="2" fill="#fff" fill-opacity=".8" stroke="#777" stroke-width="0.9"/>
<circle cx="447.7" cy="400.9" r="2" fill="#fff" fill-opacity=".8" stroke="#777" stroke-width="0.9"/>
<circle cx="1134.0" cy="139.7" r="2" fill="#fff" fill-opacity=".8" stroke="#777" stroke-width="0.9"/>
<circle cx="1123.2" cy="229.1" r="2" fill="#fff" fill-opacity=".8" stroke="#777" stroke-width="0.9"/>
<circle cx="1015.3" cy="277.6" r="2" fill="#fff" fill-opacity=".8" stroke="#777" stroke-width="0.9"/>
<circle cx="1019.3" cy="358.6" r="2" fill="#fff" fill-opacity=".8" stroke="#777" stroke-width="0.9"/>
<circle cx="1090.2" cy="357.2" r="2" fill="#fff" fill-opacity=".8" stroke="#777" stroke-width="0.9"/>
<circle cx="844.0" cy="365.3" r="2" fill="#fff" fill-opacity=".8" stroke="#777" stroke-width="0.9"/>
<circle cx="897.3" cy="409.5" r="2" fill="#fff" fill-opacity=".8" stroke="#777" stroke-width="0.9"/>
<circle cx="1072.0" cy="406.8" r="3.2" fill="#fff" fill-opacity=".9" stroke="#777" stroke-width="1.1"/>
<circle cx="393.3" cy="457.0" r="2" fill="#fff" fill-opacity=".8" stroke="#777" stroke-width="0.9"/>
<circle cx="135.6" cy="497.3" r="2" fill="#fff" fill-opacity=".8" stroke="#777" stroke-width="0.9"/>
<circle cx="255.7" cy="498.0" r="2" fill="#fff" fill-opacity=".8" stroke="#777" stroke-width="0.9"/>
<circle cx="5.7" cy="518.1" r="2" fill="#fff" fill-opacity=".8" stroke="#777" stroke-width="0.9"/>
<circle cx="286.9" cy="531.5" r="3.2" fill="#fff" fill-opacity=".9" stroke="#777" stroke-width="1.1"/>
<circle cx="128.2" cy="548.0" r="2" fill="#fff" fill-opacity=".8" stroke="#777" stroke-width="0.9"/>
<circle cx="178.5" cy="551.3" r="2" fill="#fff" fill-opacity=".8" stroke="#777" stroke-width="0.9"/>
<circle cx="324.5" cy="558.1" r="2" fill="#fff" fill-opacity=".8" stroke="#777" stroke-width="0.9"/>
<circle cx="54.4" cy="578.9" r="2" fill="#fff" fill-opacity=".8" stroke="#777" stroke-width="0.9"/>
<circle cx="164.4" cy="597.0" r="2" fill="#fff" fill-opacity=".8" stroke="#777" stroke-width="0.9"/>
<circle cx="210.7" cy="669.1" r="3.4" fill="#f2efe9" stroke="#555" stroke-width="1.1"/><circle cx="210.7" cy="669.1" r="1.4" fill="#555"/>
<circle cx="12.4" cy="631.5" r="3.2" fill="#fff" fill-opacity=".9" stroke="#777" stroke-width="1.1"/>
<circle cx="369.1" cy="654.0" r="2" fill="#fff" fill-opacity=".8" stroke="#777" stroke-width="0.9"/>
<circle cx="62.1" cy="656.0" r="2" fill="#fff" fill-opacity=".8" stroke="#777" stroke-width="0.9"/>
<circle cx="143.3" cy="682.2" r="3.2" fill="#fff" fill-opacity=".9" stroke="#777" stroke-width="1.1"/>
<circle cx="271.8" cy="694.6" r="2" fill="#fff" fill-opacity=".8" stroke="#777" stroke-width="0.9"/>
<circle cx="412.5" cy="518.1" r="3.4" fill="#f2efe9" stroke="#555" stroke-width="1.1"/><circle cx="412.5" cy="518.1" r="1.4" fill="#555"/>
<circle cx="540.7" cy="497.3" r="2" fill="#fff" fill-opacity=".8" stroke="#777" stroke-width="0.9"/>
<circle cx="649.1" cy="481.5" r="2" fill="#fff" fill-opacity=".8" stroke="#777" stroke-width="0.9"/>
<circle cx="715.5" cy="488.3" r="2" fill="#fff" fill-opacity=".8" stroke="#777" stroke-width="0.9"/>
<circle cx="622.2" cy="494.3" r="2" fill="#fff" fill-opacity=".8" stroke="#777" stroke-width="0.9"/>
<circle cx="711.1" cy="523.2" r="3.2" fill="#fff" fill-opacity=".9" stroke="#777" stroke-width="1.1"/>
<circle cx="566.8" cy="539.3" r="2" fill="#fff" fill-opacity=".8" stroke="#777" stroke-width="0.9"/>
<circle cx="479.9" cy="602.3" r="2" fill="#fff" fill-opacity=".8" stroke="#777" stroke-width="0.9"/>
<circle cx="531.9" cy="605.7" r="2" fill="#fff" fill-opacity=".8" stroke="#777" stroke-width="0.9"/>
<circle cx="666.8" cy="598.7" r="3.4" fill="#f2efe9" stroke="#555" stroke-width="1.1"/><circle cx="666.8" cy="598.7" r="1.4" fill="#555"/>
<circle cx="791.7" cy="613.2" r="2" fill="#fff" fill-opacity=".8" stroke="#777" stroke-width="0.9"/>
<circle cx="1003.2" cy="425.3" r="2" fill="#fff" fill-opacity=".8" stroke="#777" stroke-width="0.9"/>
<circle cx="1189.0" cy="433.1" r="2" fill="#fff" fill-opacity=".8" stroke="#777" stroke-width="0.9"/>
<circle cx="845.0" cy="439.8" r="3.2" fill="#fff" fill-opacity=".9" stroke="#777" stroke-width="1.1"/>
<circle cx="900.6" cy="458.3" r="2" fill="#fff" fill-opacity=".8" stroke="#777" stroke-width="0.9"/>
<circle cx="1034.5" cy="457.3" r="2" fill="#fff" fill-opacity=".8" stroke="#777" stroke-width="0.9"/>
<circle cx="1076.7" cy="484.3" r="2" fill="#fff" fill-opacity=".8" stroke="#777" stroke-width="0.9"/>
<circle cx="970.4" cy="514.7" r="2" fill="#fff" fill-opacity=".8" stroke="#777" stroke-width="0.9"/>
<circle cx="805.2" cy="513.0" r="2" fill="#fff" fill-opacity=".8" stroke="#777" stroke-width="0.9"/>
<circle cx="1049.7" cy="528.2" r="2" fill="#fff" fill-opacity=".8" stroke="#777" stroke-width="0.9"/>
<circle cx="961.0" cy="531.5" r="3.2" fill="#fff" fill-opacity=".9" stroke="#777" stroke-width="1.1"/>
<circle cx="1099.3" cy="549.4" r="3.2" fill="#fff" fill-opacity=".9" stroke="#777" stroke-width="1.1"/>
<circle cx="889.5" cy="575.4" r="2" fill="#fff" fill-opacity=".8" stroke="#777" stroke-width="0.9"/>
<circle cx="1029.5" cy="572.0" r="2" fill="#fff" fill-opacity=".8" stroke="#777" stroke-width="0.9"/>
<circle cx="983.3" cy="588.2" r="3.2" fill="#fff" fill-opacity=".9" stroke="#777" stroke-width="1.1"/>
<circle cx="918.2" cy="595.6" r="2" fill="#fff" fill-opacity=".8" stroke="#777" stroke-width="0.9"/>
<circle cx="989.0" cy="629.3" r="3.4" fill="#f2efe9" stroke="#555" stroke-width="1.1"/><circle cx="989.0" cy="629.3" r="1.4" fill="#555"/>
<circle cx="857.5" cy="638.4" r="3.2" fill="#fff" fill-opacity=".9" stroke="#777" stroke-width="1.1"/>
<circle cx="1058.1" cy="648.6" r="2" fill="#fff" fill-opacity=".8" stroke="#777" stroke-width="0.9"/>
<circle cx="944.1" cy="665.8" r="2" fill="#fff" fill-opacity=".8" stroke="#777" stroke-width="0.9"/>
<circle cx="979.5" cy="675.5" r="2" fill="#fff" fill-opacity=".8" stroke="#777" stroke-width="0.9"/>
<circle cx="1086.8" cy="697.8" r="2" fill="#fff" fill-opacity=".8" stroke="#777" stroke-width="0.9"/>
<circle cx="208.1" cy="733.0" r="2" fill="#fff" fill-opacity=".8" stroke="#777" stroke-width="0.9"/>
<circle cx="135.6" cy="760.8" r="2" fill="#fff" fill-opacity=".8" stroke="#777" stroke-width="0.9"/>
<circle cx="221.5" cy="775.9" r="2" fill="#fff" fill-opacity=".8" stroke="#777" stroke-width="0.9"/>
<circle cx="312.1" cy="783.3" r="2" fill="#fff" fill-opacity=".8" stroke="#777" stroke-width="0.9"/>
<circle cx="213.4" cy="826.9" r="3.4" fill="#f2efe9" stroke="#555" stroke-width="1.1"/><circle cx="213.4" cy="826.9" r="1.4" fill="#555"/>
<circle cx="336.6" cy="853.4" r="2" fill="#fff" fill-opacity=".8" stroke="#777" stroke-width="0.9"/>
<circle cx="236.9" cy="860.5" r="2" fill="#fff" fill-opacity=".8" stroke="#777" stroke-width="0.9"/>
<circle cx="386.9" cy="860.5" r="2" fill="#fff" fill-opacity=".8" stroke="#777" stroke-width="0.9"/>
<circle cx="317.8" cy="889.7" r="2" fill="#fff" fill-opacity=".8" stroke="#777" stroke-width="0.9"/>
<circle cx="1.0" cy="825.9" r="2" fill="#fff" fill-opacity=".8" stroke="#777" stroke-width="0.9"/>
<circle cx="438.0" cy="701.7" r="2" fill="#fff" fill-opacity=".8" stroke="#777" stroke-width="0.9"/>
<circle cx="748.4" cy="716.8" r="2" fill="#fff" fill-opacity=".8" stroke="#777" stroke-width="0.9"/>
<circle cx="751.7" cy="742.7" r="2" fill="#fff" fill-opacity=".8" stroke="#777" stroke-width="0.9"/>
<circle cx="721.5" cy="819.2" r="3.4" fill="#f2efe9" stroke="#555" stroke-width="1.1"/><circle cx="721.5" cy="819.2" r="1.4" fill="#555"/>
<circle cx="626.9" cy="866.2" r="2" fill="#fff" fill-opacity=".8" stroke="#777" stroke-width="0.9"/>
<circle cx="429.3" cy="871.2" r="2" fill="#fff" fill-opacity=".8" stroke="#777" stroke-width="0.9"/>
<circle cx="716.5" cy="893.0" r="2" fill="#fff" fill-opacity=".8" stroke="#777" stroke-width="0.9"/>
<circle cx="524.2" cy="921.5" r="2" fill="#fff" fill-opacity=".8" stroke="#777" stroke-width="0.9"/>
<circle cx="903.0" cy="710.9" r="2" fill="#fff" fill-opacity=".8" stroke="#777" stroke-width="0.9"/>
<circle cx="1091.2" cy="726.1" r="2" fill="#fff" fill-opacity=".8" stroke="#777" stroke-width="0.9"/>
<circle cx="1034.5" cy="720.4" r="2" fill="#fff" fill-opacity=".8" stroke="#777" stroke-width="0.9"/>
<circle cx="830.5" cy="766.6" r="3.4" fill="#f2efe9" stroke="#555" stroke-width="1.1"/><circle cx="830.5" cy="766.6" r="1.4" fill="#555"/>
<circle cx="812.9" cy="772.6" r="2" fill="#fff" fill-opacity=".8" stroke="#777" stroke-width="0.9"/>
<circle cx="1000.8" cy="766.9" r="2" fill="#fff" fill-opacity=".8" stroke="#777" stroke-width="0.9"/>
<circle cx="1065.5" cy="781.7" r="2" fill="#fff" fill-opacity=".8" stroke="#777" stroke-width="0.9"/>
<circle cx="910.4" cy="808.0" r="2" fill="#fff" fill-opacity=".8" stroke="#777" stroke-width="0.9"/>
<circle cx="956.9" cy="824.2" r="2" fill="#fff" fill-opacity=".8" stroke="#777" stroke-width="0.9"/>
<circle cx="1014.3" cy="845.1" r="2" fill="#fff" fill-opacity=".8" stroke="#777" stroke-width="0.9"/>
<circle cx="1052.1" cy="839.4" r="2" fill="#fff" fill-opacity=".8" stroke="#777" stroke-width="0.9"/>
<circle cx="1068.2" cy="896.4" r="3.2" fill="#fff" fill-opacity=".9" stroke="#777" stroke-width="1.1"/>
<circle cx="1168.4" cy="921.0" r="2" fill="#fff" fill-opacity=".8" stroke="#777" stroke-width="0.9"/>
<text x="303.7" y="147.6" font-size="14.8" textLength="40.3" lengthAdjust="spacingAndGlyphs" fill="#505050" stroke="#fff" stroke-opacity=".75" stroke-width="2" paint-order="stroke">Praha</text>
<text x="74.5" y="185.6" font-size="12" textLength="57.0" lengthAdjust="spacingAndGlyphs" fill="#606060" stroke="#fff" stroke-opacity=".75" stroke-width="2" paint-order="stroke">Würzburg</text>
<text x="99.7" y="229.1" font-size="14.8" textLength="68.1" lengthAdjust="spacingAndGlyphs" fill="#505050" stroke="#fff" stroke-opacity=".75" stroke-width="2" paint-order="stroke">Nürnberg</text>
<text x="249.0" y="199.0" font-size="12" textLength="31.2" lengthAdjust="spacingAndGlyphs" fill="#606060" stroke="#fff" stroke-opacity=".75" stroke-width="2" paint-order="stroke">Plzeň</text>
<text x="270.1" y="229.0" font-size="12.5" textLength="54.7" lengthAdjust="spacingAndGlyphs" fill="#a286b2" stroke="#fff" stroke-opacity=".75" stroke-width="2" paint-order="stroke" font-style="italic">Jihozápad</text>
<text x="162.8" y="258.5" font-size="12.5" textLength="38.6" lengthAdjust="spacingAndGlyphs" fill="#a286b2" stroke="#fff" stroke-opacity=".75" stroke-width="2" paint-order="stroke" font-style="italic">Bayern</text>
<text x="88.3" y="275.8" font-size="12" textLength="59.4" lengthAdjust="spacingAndGlyphs" fill="#606060" stroke="#fff" stroke-opacity=".75" stroke-width="2" paint-order="stroke">Ingolstadt</text>
<text x="95.0" y="299.7" font-size="12" textLength="56.7" lengthAdjust="spacingAndGlyphs" fill="#606060" stroke="#fff" stroke-opacity=".75" stroke-width="2" paint-order="stroke">Augsburg</text>
<text x="129.2" y="342.2" font-size="14.8" textLength="65.4" lengthAdjust="spacingAndGlyphs" fill="#505050" stroke="#fff" stroke-opacity=".75" stroke-width="2" paint-order="stroke">München</text>
<text x="237.6" y="329.0" font-size="12.5" textLength="82.9" lengthAdjust="spacingAndGlyphs" fill="#a286b2" stroke="#fff" stroke-opacity=".75" stroke-width="2" paint-order="stroke" font-style="italic">Oberösterreich</text>
<text x="219.8" y="348.0" font-size="12" textLength="50.3" lengthAdjust="spacingAndGlyphs" fill="#606060" stroke="#fff" stroke-opacity=".75" stroke-width="2" paint-order="stroke">Salzburg</text>
<text x="309.4" y="269.1" font-size="12" textLength="34.6" lengthAdjust="spacingAndGlyphs" fill="#606060" stroke="#fff" stroke-opacity=".75" stroke-width="2" paint-order="stroke">České</text>
<text x="295.3" y="284.2" font-size="12" textLength="62.8" lengthAdjust="spacingAndGlyphs" fill="#606060" stroke="#fff" stroke-opacity=".75" stroke-width="2" paint-order="stroke">Budějovice</text>
<text x="309.4" y="376.8" font-size="14.8" textLength="78.2" lengthAdjust="spacingAndGlyphs" fill="#9a6aa4" stroke="#fff" stroke-opacity=".75" stroke-width="2" paint-order="stroke">Österreich</text>
<text x="323.8" y="401.8" font-size="12.5" textLength="59.7" lengthAdjust="spacingAndGlyphs" fill="#a286b2" stroke="#fff" stroke-opacity=".75" stroke-width="2" paint-order="stroke" font-style="italic">Steiermark</text>
<text x="126.8" y="403.5" font-size="12.5" textLength="24.2" lengthAdjust="spacingAndGlyphs" fill="#a286b2" stroke="#fff" stroke-opacity=".75" stroke-width="2" paint-order="stroke" font-style="italic">Tirol</text>
<text x="5.0" y="382.5" font-size="12" textLength="63.8" lengthAdjust="spacingAndGlyphs" fill="#606060" stroke="#fff" stroke-opacity=".75" stroke-width="2" paint-order="stroke">Winterthur</text>
<text x="0.0" y="287.1" font-size="12.5" textLength="35.2" lengthAdjust="spacingAndGlyphs" fill="#a286b2" stroke="#fff" stroke-opacity=".75" stroke-width="2" paint-order="stroke" font-style="italic">Baden-</text>
<text x="-23.5" y="302.2" font-size="12.5" textLength="78.2" lengthAdjust="spacingAndGlyphs" fill="#a286b2" stroke="#fff" stroke-opacity=".75" stroke-width="2" paint-order="stroke" font-style="italic">Württemberg</text>
<text x="-38.6" y="222.1" font-size="12" textLength="54.7" lengthAdjust="spacingAndGlyphs" fill="#606060" stroke="#fff" stroke-opacity=".75" stroke-width="2" paint-order="stroke">Mannheim</text>
<text x="-36.9" y="263.4" font-size="12" textLength="49.7" lengthAdjust="spacingAndGlyphs" fill="#606060" stroke="#fff" stroke-opacity=".75" stroke-width="2" paint-order="stroke">Karlsruhe</text>
<text x="-31.9" y="420.4" font-size="14.8" textLength="63.8" lengthAdjust="spacingAndGlyphs" fill="#9a6aa4" stroke="#fff" stroke-opacity=".75" stroke-width="2" paint-order="stroke">Svizzera/</text>
<text x="-40.3" y="398.6" font-size="14.8" textLength="45.3" lengthAdjust="spacingAndGlyphs" fill="#9a6aa4" stroke="#fff" stroke-opacity=".75" stroke-width="2" paint-order="stroke">Suisse/</text>
<text x="370.9" y="142.8" font-size="12.5" textLength="74.5" lengthAdjust="spacingAndGlyphs" fill="#a286b2" stroke="#fff" stroke-opacity=".75" stroke-width="2" paint-order="stroke" font-style="italic">Severovýchod</text>
<text x="406.1" y="163.7" font-size="12" textLength="58.4" lengthAdjust="spacingAndGlyphs" fill="#606060" stroke="#fff" stroke-opacity=".75" stroke-width="2" paint-order="stroke">Pardubice</text>
<text x="363.8" y="192.2" font-size="14.8" textLength="43.6" lengthAdjust="spacingAndGlyphs" fill="#9a6aa4" stroke="#fff" stroke-opacity=".75" stroke-width="2" paint-order="stroke">Česko</text>
<text x="520.9" y="172.1" font-size="12" textLength="44.3" lengthAdjust="spacingAndGlyphs" fill="#606060" stroke="#fff" stroke-opacity=".75" stroke-width="2" paint-order="stroke">Ostrava</text>
<text x="543.4" y="131.0" font-size="12.5" textLength="73.8" lengthAdjust="spacingAndGlyphs" fill="#a286b2" stroke="#fff" stroke-opacity=".75" stroke-width="2" paint-order="stroke" font-style="italic">województwo</text>
<text x="562.8" y="146.8" font-size="12.5" textLength="35.9" lengthAdjust="spacingAndGlyphs" fill="#a286b2" stroke="#fff" stroke-opacity=".75" stroke-width="2" paint-order="stroke" font-style="italic">śląskie</text>
<text x="617.5" y="174.0" font-size="12.5" textLength="74.5" lengthAdjust="spacingAndGlyphs" fill="#a286b2" stroke="#fff" stroke-opacity=".75" stroke-width="2" paint-order="stroke" font-style="italic">województwo</text>
<text x="622.2" y="188.7" font-size="12.5" textLength="65.8" lengthAdjust="spacingAndGlyphs" fill="#a286b2" stroke="#fff" stroke-opacity=".75" stroke-width="2" paint-order="stroke" font-style="italic">małopolskie</text>
<text x="724.9" y="165.6" font-size="12.5" textLength="74.5" lengthAdjust="spacingAndGlyphs" fill="#a286b2" stroke="#fff" stroke-opacity=".75" stroke-width="2" paint-order="stroke" font-style="italic">województwo</text>
<text x="724.9" y="180.4" font-size="12.5" textLength="74.5" lengthAdjust="spacingAndGlyphs" fill="#a286b2" stroke="#fff" stroke-opacity=".75" stroke-width="2" paint-order="stroke" font-style="italic">podkarpackie</text>
<text x="469.5" y="200.5" font-size="12.5" textLength="40.3" lengthAdjust="spacingAndGlyphs" fill="#a286b2" stroke="#fff" stroke-opacity=".75" stroke-width="2" paint-order="stroke" font-style="italic">Střední</text>
<text x="468.9" y="215.6" font-size="12.5" textLength="41.3" lengthAdjust="spacingAndGlyphs" fill="#a286b2" stroke="#fff" stroke-opacity=".75" stroke-width="2" paint-order="stroke" font-style="italic">Morava</text>
<text x="391.0" y="235.7" font-size="12.5" textLength="59.4" lengthAdjust="spacingAndGlyphs" fill="#a286b2" stroke="#fff" stroke-opacity=".75" stroke-width="2" paint-order="stroke" font-style="italic">Jihovýchod</text>
<text x="553.8" y="225.5" font-size="12" textLength="30.9" lengthAdjust="spacingAndGlyphs" fill="#606060" stroke="#fff" stroke-opacity=".75" stroke-width="2" paint-order="stroke">Žilina</text>
<text x="680.3" y="238.4" font-size="12.5" textLength="53.7" lengthAdjust="spacingAndGlyphs" fill="#a286b2" stroke="#fff" stroke-opacity=".75" stroke-width="2" paint-order="stroke" font-style="italic">Prešovský</text>
<text x="697.0" y="252.5" font-size="12.5" textLength="20.1" lengthAdjust="spacingAndGlyphs" fill="#a286b2" stroke="#fff" stroke-opacity=".75" stroke-width="2" paint-order="stroke" font-style="italic">kraj</text>
<text x="417.5" y="310.7" font-size="14.8" textLength="33.9" lengthAdjust="spacingAndGlyphs" fill="#505050" stroke="#fff" stroke-opacity=".75" stroke-width="2" paint-order="stroke">Wien</text>
<text x="485.0" y="328.8" font-size="14.8" textLength="71.1" lengthAdjust="spacingAndGlyphs" fill="#505050" stroke="#fff" stroke-opacity=".75" stroke-width="2" paint-order="stroke">Bratislava</text>
<text x="492.3" y="357.4" font-size="12" textLength="27.9" lengthAdjust="spacingAndGlyphs" fill="#606060" stroke="#fff" stroke-opacity=".75" stroke-width="2" paint-order="stroke">Győr</text>
<text x="411.1" y="396.0" font-size="12" textLength="75.2" lengthAdjust="spacingAndGlyphs" fill="#606060" stroke="#fff" stroke-opacity=".75" stroke-width="2" paint-order="stroke">Szombathely</text>
<text x="539.3" y="410.3" font-size="14.8" textLength="99.0" lengthAdjust="spacingAndGlyphs" fill="#9a6aa4" stroke="#fff" stroke-opacity=".75" stroke-width="2" paint-order="stroke">Magyarország</text>
<text x="977.2" y="125.2" font-size="14.8" textLength="38.8" lengthAdjust="spacingAndGlyphs" fill="#505050" stroke="#fff" stroke-opacity=".75" stroke-width="2" paint-order="stroke">Рівне</text>
<text x="1100.3" y="158.2" font-size="14.8" textLength="67.5" lengthAdjust="spacingAndGlyphs" fill="#505050" stroke="#fff" stroke-opacity=".75" stroke-width="2" paint-order="stroke">Житомир</text>
<text x="1181.2" y="174.8" font-size="12" textLength="80.9" lengthAdjust="spacingAndGlyphs" fill="#606060" stroke="#fff" stroke-opacity=".75" stroke-width="2" paint-order="stroke">Біла Церква</text>
<text x="837.2" y="184.4" font-size="12.5" textLength="55.6" lengthAdjust="spacingAndGlyphs" fill="#a286b2" stroke="#fff" stroke-opacity=".75" stroke-width="2" paint-order="stroke" font-style="italic">Львівська</text>
<text x="839.9" y="198.6" font-size="12.5" textLength="50.3" lengthAdjust="spacingAndGlyphs" fill="#a286b2" stroke="#fff" stroke-opacity=".75" stroke-width="2" paint-order="stroke" font-style="italic">область</text>
<text x="997.4" y="202.6" font-size="12.5" textLength="76.6" lengthAdjust="spacingAndGlyphs" fill="#a286b2" stroke="#fff" stroke-opacity=".75" stroke-width="2" paint-order="stroke" font-style="italic">Хмельницька</text>
<text x="1010.9" y="217.1" font-size="12.5" textLength="49.9" lengthAdjust="spacingAndGlyphs" fill="#a286b2" stroke="#fff" stroke-opacity=".75" stroke-width="2" paint-order="stroke" font-style="italic">область</text>
<text x="1092.9" y="224.0" font-size="14.8" textLength="59.7" lengthAdjust="spacingAndGlyphs" fill="#505050" stroke="#fff" stroke-opacity=".75" stroke-width="2" paint-order="stroke">Вінниця</text>
<text x="1096.9" y="253.5" font-size="12.5" textLength="59.0" lengthAdjust="spacingAndGlyphs" fill="#a286b2" stroke="#fff" stroke-opacity=".75" stroke-width="2" paint-order="stroke" font-style="italic">Вінницька</text>
<text x="1101.0" y="268.7" font-size="12.5" textLength="49.9" lengthAdjust="spacingAndGlyphs" fill="#a286b2" stroke="#fff" stroke-opacity=".75" stroke-width="2" paint-order="stroke" font-style="italic">область</text>
<text x="982.2" y="258.1" font-size="12" textLength="67.5" lengthAdjust="spacingAndGlyphs" fill="#606060" stroke="#fff" stroke-opacity=".75" stroke-width="2" paint-order="stroke">Кам’янець-</text>
<text x="976.5" y="272.6" font-size="12" textLength="77.6" lengthAdjust="spacingAndGlyphs" fill="#606060" stroke="#fff" stroke-opacity=".75" stroke-width="2" paint-order="stroke">Подільський</text>
<text x="850.7" y="272.8" font-size="12.5" textLength="108.9" lengthAdjust="spacingAndGlyphs" fill="#a286b2" stroke="#fff" stroke-opacity=".75" stroke-width="2" paint-order="stroke" font-style="italic">Івано-Франківська</text>
<text x="880.1" y="288.6" font-size="12.5" textLength="49.2" lengthAdjust="spacingAndGlyphs" fill="#a286b2" stroke="#fff" stroke-opacity=".75" stroke-width="2" paint-order="stroke" font-style="italic">область</text>
<text x="941.8" y="310.5" font-size="12.5" textLength="71.5" lengthAdjust="spacingAndGlyphs" fill="#a286b2" stroke="#fff" stroke-opacity=".75" stroke-width="2" paint-order="stroke" font-style="italic">Чернівецька</text>
<text x="951.9" y="325.7" font-size="12.5" textLength="50.6" lengthAdjust="spacingAndGlyphs" fill="#a286b2" stroke="#fff" stroke-opacity=".75" stroke-width="2" paint-order="stroke" font-style="italic">область</text>
<text x="994.4" y="352.5" font-size="12" textLength="50.3" lengthAdjust="spacingAndGlyphs" fill="#606060" stroke="#fff" stroke-opacity=".75" stroke-width="2" paint-order="stroke">Botoșani</text>
<text x="947.8" y="379.7" font-size="12.5" textLength="45.5" lengthAdjust="spacingAndGlyphs" fill="#a286b2" stroke="#fff" stroke-opacity=".75" stroke-width="2" paint-order="stroke" font-style="italic">Suceava</text>
<text x="1079.4" y="373.1" font-size="12" textLength="24.3" lengthAdjust="spacingAndGlyphs" fill="#606060" stroke="#fff" stroke-opacity=".75" stroke-width="2" paint-order="stroke">Bălți</text>
<text x="1103.7" y="407.8" font-size="14.8" textLength="62.4" lengthAdjust="spacingAndGlyphs" fill="#9a6aa4" stroke="#fff" stroke-opacity=".75" stroke-width="2" paint-order="stroke">Moldova</text>
<text x="986.3" y="405.1" font-size="12" textLength="34.1" lengthAdjust="spacingAndGlyphs" fill="#606060" stroke="#fff" stroke-opacity=".75" stroke-width="2" paint-order="stroke">Piatra</text>
<text x="815.3" y="378.8" font-size="12" textLength="58.0" lengthAdjust="spacingAndGlyphs" fill="#606060" stroke="#fff" stroke-opacity=".75" stroke-width="2" paint-order="stroke">Baia Mare</text>
<text x="774.8" y="349.2" font-size="12" textLength="59.0" lengthAdjust="spacingAndGlyphs" fill="#606060" stroke="#fff" stroke-opacity=".75" stroke-width="2" paint-order="stroke">Satu Mare</text>
<text x="276.8" y="443.8" font-size="12.5" textLength="43.6" lengthAdjust="spacingAndGlyphs" fill="#a286b2" stroke="#fff" stroke-opacity=".75" stroke-width="2" paint-order="stroke" font-style="italic">Kärnten</text>
<text x="370.1" y="452.1" font-size="12" textLength="46.0" lengthAdjust="spacingAndGlyphs" fill="#606060" stroke="#fff" stroke-opacity=".75" stroke-width="2" paint-order="stroke">Maribor</text>
<text x="119.1" y="456.3" font-size="12.5" textLength="48.7" lengthAdjust="spacingAndGlyphs" fill="#a286b2" stroke="#fff" stroke-opacity=".75" stroke-width="2" paint-order="stroke" font-style="italic">Trentino-</text>
<text x="113.1" y="471.4" font-size="12.5" textLength="59.7" lengthAdjust="spacingAndGlyphs" fill="#a286b2" stroke="#fff" stroke-opacity=".75" stroke-width="2" paint-order="stroke" font-style="italic">Alto Adige/</text>
<text x="121.8" y="486.5" font-size="12.5" textLength="44.3" lengthAdjust="spacingAndGlyphs" fill="#a286b2" stroke="#fff" stroke-opacity=".75" stroke-width="2" paint-order="stroke" font-style="italic">Südtirol</text>
<text x="301.0" y="501.3" font-size="14.8" textLength="66.4" lengthAdjust="spacingAndGlyphs" fill="#9a6aa4" stroke="#fff" stroke-opacity=".75" stroke-width="2" paint-order="stroke">Slovenija</text>
<text x="117.4" y="511.5" font-size="12" textLength="37.6" lengthAdjust="spacingAndGlyphs" fill="#606060" stroke="#fff" stroke-opacity=".75" stroke-width="2" paint-order="stroke">Trento</text>
<text x="238.9" y="512.5" font-size="12" textLength="34.6" lengthAdjust="spacingAndGlyphs" fill="#606060" stroke="#fff" stroke-opacity=".75" stroke-width="2" paint-order="stroke">Udine</text>
<text x="-15.1" y="513.1" font-size="12" textLength="39.3" lengthAdjust="spacingAndGlyphs" fill="#606060" stroke="#fff" stroke-opacity=".75" stroke-width="2" paint-order="stroke">Varese</text>
<text x="388.3" y="511.4" font-size="14.8" textLength="48.0" lengthAdjust="spacingAndGlyphs" fill="#505050" stroke="#fff" stroke-opacity=".75" stroke-width="2" paint-order="stroke">Zagreb</text>
<text x="22.5" y="538.5" font-size="12.5" textLength="60.4" lengthAdjust="spacingAndGlyphs" fill="#a286b2" stroke="#fff" stroke-opacity=".75" stroke-width="2" paint-order="stroke" font-style="italic">Lombardia</text>
<text x="161.1" y="535.1" font-size="12.5" textLength="36.9" lengthAdjust="spacingAndGlyphs" fill="#a286b2" stroke="#fff" stroke-opacity=".75" stroke-width="2" paint-order="stroke" font-style="italic">Veneto</text>
<text x="263.4" y="549.3" font-size="14.8" textLength="47.0" lengthAdjust="spacingAndGlyphs" fill="#505050" stroke="#fff" stroke-opacity=".75" stroke-width="2" paint-order="stroke">Trieste</text>
<text x="108.1" y="561.8" font-size="12" textLength="40.6" lengthAdjust="spacingAndGlyphs" fill="#606060" stroke="#fff" stroke-opacity=".75" stroke-width="2" paint-order="stroke">Verona</text>
<text x="183.9" y="556.1" font-size="12" textLength="42.6" lengthAdjust="spacingAndGlyphs" fill="#606060" stroke="#fff" stroke-opacity=".75" stroke-width="2" paint-order="stroke">Padova</text>
<text x="-25.2" y="561.8" font-size="12" textLength="39.3" lengthAdjust="spacingAndGlyphs" fill="#606060" stroke="#fff" stroke-opacity=".75" stroke-width="2" paint-order="stroke">Novara</text>
<text x="307.7" y="574.5" font-size="12" textLength="34.6" lengthAdjust="spacingAndGlyphs" fill="#606060" stroke="#fff" stroke-opacity=".75" stroke-width="2" paint-order="stroke">Rijeka</text>
<text x="29.5" y="593.7" font-size="12" textLength="50.3" lengthAdjust="spacingAndGlyphs" fill="#606060" stroke="#fff" stroke-opacity=".75" stroke-width="2" paint-order="stroke">Piacenza</text>
<text x="143.3" y="592.0" font-size="12" textLength="41.9" lengthAdjust="spacingAndGlyphs" fill="#606060" stroke="#fff" stroke-opacity=".75" stroke-width="2" paint-order="stroke">Ferrara</text>
<text x="104.7" y="619.0" font-size="12.5" textLength="37.9" lengthAdjust="spacingAndGlyphs" fill="#a286b2" stroke="#fff" stroke-opacity=".75" stroke-width="2" paint-order="stroke" font-style="italic">Emilia-</text>
<text x="96.6" y="634.8" font-size="12.5" textLength="53.4" lengthAdjust="spacingAndGlyphs" fill="#a286b2" stroke="#fff" stroke-opacity=".75" stroke-width="2" paint-order="stroke" font-style="italic">Romagna</text>
<text x="317.1" y="624.8" font-size="14.8" textLength="65.4" lengthAdjust="spacingAndGlyphs" fill="#9a6aa4" stroke="#fff" stroke-opacity=".75" stroke-width="2" paint-order="stroke">Hrvatska</text>
<text x="171.8" y="641.6" font-size="14.8" textLength="78.9" lengthAdjust="spacingAndGlyphs" fill="#505050" stroke="#fff" stroke-opacity=".75" stroke-width="2" paint-order="stroke">Città di San</text>
<text x="186.9" y="661.7" font-size="14.8" textLength="49.0" lengthAdjust="spacingAndGlyphs" fill="#505050" stroke="#fff" stroke-opacity=".75" stroke-width="2" paint-order="stroke">Marino</text>
<text x="-15.1" y="649.3" font-size="14.8" textLength="52.0" lengthAdjust="spacingAndGlyphs" fill="#505050" stroke="#fff" stroke-opacity=".75" stroke-width="2" paint-order="stroke">Genova</text>
<text x="352.3" y="649.0" font-size="12" textLength="33.6" lengthAdjust="spacingAndGlyphs" fill="#606060" stroke="#fff" stroke-opacity=".75" stroke-width="2" paint-order="stroke">Zadar</text>
<text x="68.1" y="660.8" font-size="12" textLength="53.4" lengthAdjust="spacingAndGlyphs" fill="#606060" stroke="#fff" stroke-opacity=".75" stroke-width="2" paint-order="stroke">La Spezia</text>
<text x="87.2" y="687.9" font-size="14.8" textLength="49.7" lengthAdjust="spacingAndGlyphs" fill="#505050" stroke="#fff" stroke-opacity=".75" stroke-width="2" paint-order="stroke">Firenze</text>
<text x="251.0" y="689.3" font-size="12" textLength="42.6" lengthAdjust="spacingAndGlyphs" fill="#606060" stroke="#fff" stroke-opacity=".75" stroke-width="2" paint-order="stroke">Ancona</text>
<text x="475.6" y="436.1" font-size="12.5" textLength="51.3" lengthAdjust="spacingAndGlyphs" fill="#a286b2" stroke="#fff" stroke-opacity=".75" stroke-width="2" paint-order="stroke" font-style="italic">Dunántúl</text>
<text x="527.6" y="492.0" font-size="12" textLength="25.8" lengthAdjust="spacingAndGlyphs" fill="#606060" stroke="#fff" stroke-opacity=".75" stroke-width="2" paint-order="stroke">Pécs</text>
<text x="628.9" y="477.2" font-size="12" textLength="39.6" lengthAdjust="spacingAndGlyphs" fill="#606060" stroke="#fff" stroke-opacity=".75" stroke-width="2" paint-order="stroke">Szeged</text>
<text x="692.0" y="483.6" font-size="12" textLength="36.9" lengthAdjust="spacingAndGlyphs" fill="#606060" stroke="#fff" stroke-opacity=".75" stroke-width="2" paint-order="stroke">Arad</text>
<text x="593.0" y="509.8" font-size="12" textLength="57.7" lengthAdjust="spacingAndGlyphs" fill="#606060" stroke="#fff" stroke-opacity=".75" stroke-width="2" paint-order="stroke">Суботица</text>
<text x="679.3" y="516.8" font-size="14.8" textLength="65.4" lengthAdjust="spacingAndGlyphs" fill="#505050" stroke="#fff" stroke-opacity=".75" stroke-width="2" paint-order="stroke">Timișoara</text>
<text x="548.7" y="556.8" font-size="12" textLength="35.2" lengthAdjust="spacingAndGlyphs" fill="#606060" stroke="#fff" stroke-opacity=".75" stroke-width="2" paint-order="stroke">Osijek</text>
<text x="609.8" y="557.6" font-size="12.5" textLength="59.4" lengthAdjust="spacingAndGlyphs" fill="#a286b2" stroke="#fff" stroke-opacity=".75" stroke-width="2" paint-order="stroke" font-style="italic">Војводина</text>
<text x="449.7" y="597.7" font-size="12" textLength="62.8" lengthAdjust="spacingAndGlyphs" fill="#606060" stroke="#fff" stroke-opacity=".75" stroke-width="2" paint-order="stroke">Banja Luka</text>
<text x="537.7" y="611.5" font-size="12" textLength="34.6" lengthAdjust="spacingAndGlyphs" fill="#606060" stroke="#fff" stroke-opacity=".75" stroke-width="2" paint-order="stroke">Doboj</text>
<text x="637.7" y="618.1" font-size="14.8" textLength="58.7" lengthAdjust="spacingAndGlyphs" fill="#505050" stroke="#fff" stroke-opacity=".75" stroke-width="2" paint-order="stroke">Београд</text>
<text x="435.3" y="636.6" font-size="14.8" textLength="164.4" lengthAdjust="spacingAndGlyphs" fill="#9a6aa4" stroke="#fff" stroke-opacity=".75" stroke-width="2" paint-order="stroke">Bosna i Hercegovina /</text>
<text x="487.3" y="655.7" font-size="14.8" textLength="60.4" lengthAdjust="spacingAndGlyphs" fill="#9a6aa4" stroke="#fff" stroke-opacity=".75" stroke-width="2" paint-order="stroke">Босна и</text>
<text x="466.5" y="674.5" font-size="14.8" textLength="101.3" lengthAdjust="spacingAndGlyphs" fill="#9a6aa4" stroke="#fff" stroke-opacity=".75" stroke-width="2" paint-order="stroke">Херцеговина</text>
<text x="671.9" y="651.0" font-size="14.8" textLength="52.7" lengthAdjust="spacingAndGlyphs" fill="#9a6aa4" stroke="#fff" stroke-opacity=".75" stroke-width="2" paint-order="stroke">Србија</text>
<text x="657.4" y="680.1" font-size="12.5" textLength="69.1" lengthAdjust="spacingAndGlyphs" fill="#a286b2" stroke="#fff" stroke-opacity=".75" stroke-width="2" paint-order="stroke" font-style="italic">Централна</text>
<text x="673.6" y="694.5" font-size="12.5" textLength="38.6" lengthAdjust="spacingAndGlyphs" fill="#a286b2" stroke="#fff" stroke-opacity=".75" stroke-width="2" paint-order="stroke" font-style="italic">Србија</text>
<text x="765.8" y="578.6" font-size="12" textLength="53.0" lengthAdjust="spacingAndGlyphs" fill="#606060" stroke="#fff" stroke-opacity=".75" stroke-width="2" paint-order="stroke">Drobeta-</text>
<text x="775.9" y="593.3" font-size="12" textLength="32.9" lengthAdjust="spacingAndGlyphs" fill="#606060" stroke="#fff" stroke-opacity=".75" stroke-width="2" paint-order="stroke">Turnu</text>
<text x="770.9" y="608.8" font-size="12" textLength="43.0" lengthAdjust="spacingAndGlyphs" fill="#606060" stroke="#fff" stroke-opacity=".75" stroke-width="2" paint-order="stroke">Severin</text>
<text x="876.0" y="426.0" font-size="12" textLength="41.5" lengthAdjust="spacingAndGlyphs" fill="#606060" stroke="#fff" stroke-opacity=".75" stroke-width="2" paint-order="stroke">Bistrița</text>
<text x="983.9" y="420.3" font-size="12" textLength="38.8" lengthAdjust="spacingAndGlyphs" fill="#606060" stroke="#fff" stroke-opacity=".75" stroke-width="2" paint-order="stroke">Neamț</text>
<text x="1061.5" y="425.3" font-size="14.8" textLength="21.9" lengthAdjust="spacingAndGlyphs" fill="#505050" stroke="#fff" stroke-opacity=".75" stroke-width="2" paint-order="stroke">Iași</text>
<text x="1155.9" y="427.7" font-size="12" textLength="69.1" lengthAdjust="spacingAndGlyphs" fill="#606060" stroke="#fff" stroke-opacity=".75" stroke-width="2" paint-order="stroke">Тирасполь</text>
<text x="803.5" y="460.7" font-size="14.8" textLength="84.3" lengthAdjust="spacingAndGlyphs" fill="#505050" stroke="#fff" stroke-opacity=".75" stroke-width="2" paint-order="stroke">Cluj-Napoca</text>
<text x="906.4" y="463.8" font-size="12" textLength="73.2" lengthAdjust="spacingAndGlyphs" fill="#606060" stroke="#fff" stroke-opacity=".75" stroke-width="2" paint-order="stroke">Târgu Mureș</text>
<text x="1016.6" y="452.3" font-size="12" textLength="35.8" lengthAdjust="spacingAndGlyphs" fill="#606060" stroke="#fff" stroke-opacity=".75" stroke-width="2" paint-order="stroke">Bacău</text>
<text x="1058.8" y="479.0" font-size="12" textLength="42.2" lengthAdjust="spacingAndGlyphs" fill="#606060" stroke="#fff" stroke-opacity=".75" stroke-width="2" paint-order="stroke">Bârlad</text>
<text x="951.9" y="494.1" font-size="12" textLength="37.1" lengthAdjust="spacingAndGlyphs" fill="#606060" stroke="#fff" stroke-opacity=".75" stroke-width="2" paint-order="stroke">Sfântu</text>
<text x="941.1" y="509.3" font-size="12" textLength="58.7" lengthAdjust="spacingAndGlyphs" fill="#606060" stroke="#fff" stroke-opacity=".75" stroke-width="2" paint-order="stroke">Gheorghe</text>
<text x="791.7" y="507.6" font-size="12" textLength="28.7" lengthAdjust="spacingAndGlyphs" fill="#606060" stroke="#fff" stroke-opacity=".75" stroke-width="2" paint-order="stroke">Deva</text>
<text x="857.5" y="521.4" font-size="14.8" textLength="65.1" lengthAdjust="spacingAndGlyphs" fill="#9a6aa4" stroke="#fff" stroke-opacity=".75" stroke-width="2" paint-order="stroke">România</text>
<text x="1001.5" y="532.2" font-size="12" textLength="43.2" lengthAdjust="spacingAndGlyphs" fill="#606060" stroke="#fff" stroke-opacity=".75" stroke-width="2" paint-order="stroke">Focșani</text>
<text x="936.7" y="549.4" font-size="14.8" textLength="47.9" lengthAdjust="spacingAndGlyphs" fill="#505050" stroke="#fff" stroke-opacity=".75" stroke-width="2" paint-order="stroke">Brașov</text>
<text x="1079.4" y="542.6" font-size="14.8" textLength="39.5" lengthAdjust="spacingAndGlyphs" fill="#505050" stroke="#fff" stroke-opacity=".75" stroke-width="2" paint-order="stroke">Galați</text>
<text x="863.5" y="555.2" font-size="12" textLength="51.3" lengthAdjust="spacingAndGlyphs" fill="#606060" stroke="#fff" stroke-opacity=".75" stroke-width="2" paint-order="stroke">Râmnicu</text>
<text x="870.3" y="570.4" font-size="12" textLength="37.8" lengthAdjust="spacingAndGlyphs" fill="#606060" stroke="#fff" stroke-opacity=".75" stroke-width="2" paint-order="stroke">Vâlcea</text>
<text x="1035.2" y="576.8" font-size="12" textLength="35.4" lengthAdjust="spacingAndGlyphs" fill="#606060" stroke="#fff" stroke-opacity=".75" stroke-width="2" paint-order="stroke">Buzău</text>
<text x="958.6" y="582.1" font-size="14.8" textLength="50.6" lengthAdjust="spacingAndGlyphs" fill="#505050" stroke="#fff" stroke-opacity=".75" stroke-width="2" paint-order="stroke">Ploiești</text>
<text x="1139.7" y="589.1" font-size="12.5" textLength="34.7" lengthAdjust="spacingAndGlyphs" fill="#a286b2" stroke="#fff" stroke-opacity=".75" stroke-width="2" paint-order="stroke" font-style="italic">Tulcea</text>
<text x="900.6" y="609.8" font-size="12" textLength="35.4" lengthAdjust="spacingAndGlyphs" fill="#606060" stroke="#fff" stroke-opacity=".75" stroke-width="2" paint-order="stroke">Pitești</text>
<text x="955.3" y="620.9" font-size="14.8" textLength="66.4" lengthAdjust="spacingAndGlyphs" fill="#505050" stroke="#fff" stroke-opacity=".75" stroke-width="2" paint-order="stroke">București</text>
<text x="831.1" y="632.0" font-size="14.8" textLength="51.6" lengthAdjust="spacingAndGlyphs" fill="#505050" stroke="#fff" stroke-opacity=".75" stroke-width="2" paint-order="stroke">Craiova</text>
<text x="1035.2" y="662.8" font-size="12" textLength="45.9" lengthAdjust="spacingAndGlyphs" fill="#606060" stroke="#fff" stroke-opacity=".75" stroke-width="2" paint-order="stroke">Călărași</text>
<text x="1086.8" y="651.5" font-size="12.5" textLength="60.7" lengthAdjust="spacingAndGlyphs" fill="#a286b2" stroke="#fff" stroke-opacity=".75" stroke-width="2" paint-order="stroke" font-style="italic">Constanța</text>
<text x="877.7" y="670.5" font-size="12" textLength="60.7" lengthAdjust="spacingAndGlyphs" fill="#606060" stroke="#fff" stroke-opacity=".75" stroke-width="2" paint-order="stroke">Alexandria</text>
<text x="967.1" y="670.5" font-size="12" textLength="25.3" lengthAdjust="spacingAndGlyphs" fill="#606060" stroke="#fff" stroke-opacity=".75" stroke-width="2" paint-order="stroke">Русе</text>
<text x="1063.2" y="692.4" font-size="12" textLength="46.2" lengthAdjust="spacingAndGlyphs" fill="#606060" stroke="#fff" stroke-opacity=".75" stroke-width="2" paint-order="stroke">Добрич</text>
<text x="120.8" y="710.0" font-size="12.5" textLength="44.3" lengthAdjust="spacingAndGlyphs" fill="#a286b2" stroke="#fff" stroke-opacity=".75" stroke-width="2" paint-order="stroke" font-style="italic">Toscana</text>
<text x="186.2" y="728.6" font-size="12" textLength="44.3" lengthAdjust="spacingAndGlyphs" fill="#606060" stroke="#fff" stroke-opacity=".75" stroke-width="2" paint-order="stroke">Perugia</text>
<text x="110.1" y="756.2" font-size="12" textLength="51.0" lengthAdjust="spacingAndGlyphs" fill="#606060" stroke="#fff" stroke-opacity=".75" stroke-width="2" paint-order="stroke">Grosseto</text>
<text x="208.1" y="771.3" font-size="12" textLength="28.5" lengthAdjust="spacingAndGlyphs" fill="#606060" stroke="#fff" stroke-opacity=".75" stroke-width="2" paint-order="stroke">Terni</text>
<text x="289.6" y="778.6" font-size="12" textLength="45.0" lengthAdjust="spacingAndGlyphs" fill="#606060" stroke="#fff" stroke-opacity=".75" stroke-width="2" paint-order="stroke">Pescara</text>
<text x="188.6" y="801.4" font-size="14.8" textLength="36.9" lengthAdjust="spacingAndGlyphs" fill="#9a6aa4" stroke="#fff" stroke-opacity=".75" stroke-width="2" paint-order="stroke">Italia</text>
<text x="274.2" y="806.7" font-size="12.5" textLength="44.0" lengthAdjust="spacingAndGlyphs" fill="#a286b2" stroke="#fff" stroke-opacity=".75" stroke-width="2" paint-order="stroke" font-style="italic">Abruzzo</text>
<text x="193.6" y="845.4" font-size="14.8" textLength="39.6" lengthAdjust="spacingAndGlyphs" fill="#505050" stroke="#fff" stroke-opacity=".75" stroke-width="2" paint-order="stroke">Roma</text>
<text x="299.7" y="848.4" font-size="12" textLength="75.2" lengthAdjust="spacingAndGlyphs" fill="#606060" stroke="#fff" stroke-opacity=".75" stroke-width="2" paint-order="stroke">Campobasso</text>
<text x="219.8" y="874.3" font-size="12" textLength="35.2" lengthAdjust="spacingAndGlyphs" fill="#606060" stroke="#fff" stroke-opacity=".75" stroke-width="2" paint-order="stroke">Latina</text>
<text x="368.1" y="875.3" font-size="12" textLength="38.6" lengthAdjust="spacingAndGlyphs" fill="#606060" stroke="#fff" stroke-opacity=".75" stroke-width="2" paint-order="stroke">Foggia</text>
<text x="297.0" y="884.3" font-size="12" textLength="43.6" lengthAdjust="spacingAndGlyphs" fill="#606060" stroke="#fff" stroke-opacity=".75" stroke-width="2" paint-order="stroke">Caserta</text>
<text x="312.1" y="910.7" font-size="12.5" textLength="56.0" lengthAdjust="spacingAndGlyphs" fill="#a286b2" stroke="#fff" stroke-opacity=".75" stroke-width="2" paint-order="stroke" font-style="italic">Campania</text>
<text x="-20.1" y="841.7" font-size="12" textLength="40.3" lengthAdjust="spacingAndGlyphs" fill="#606060" stroke="#fff" stroke-opacity=".75" stroke-width="2" paint-order="stroke">Ajaccio</text>
<text x="-28.5" y="911.5" font-size="12" textLength="39.6" lengthAdjust="spacingAndGlyphs" fill="#606060" stroke="#fff" stroke-opacity=".75" stroke-width="2" paint-order="stroke">Sassari</text>
<text x="379.2" y="934.7" font-size="12" textLength="46.0" lengthAdjust="spacingAndGlyphs" fill="#606060" stroke="#fff" stroke-opacity=".75" stroke-width="2" paint-order="stroke">Potenza</text>
<text x="425.9" y="698.4" font-size="12" textLength="25.5" lengthAdjust="spacingAndGlyphs" fill="#606060" stroke="#fff" stroke-opacity=".75" stroke-width="2" paint-order="stroke">Split</text>
<text x="557.8" y="762.1" font-size="14.8" textLength="83.9" lengthAdjust="spacingAndGlyphs" fill="#9a6aa4" stroke="#fff" stroke-opacity=".75" stroke-width="2" paint-order="stroke">Crna Gora /</text>
<text x="561.1" y="781.3" font-size="14.8" textLength="80.5" lengthAdjust="spacingAndGlyphs" fill="#9a6aa4" stroke="#fff" stroke-opacity=".75" stroke-width="2" paint-order="stroke">Црна Гора</text>
<text x="661.1" y="771.2" font-size="14.8" textLength="62.8" lengthAdjust="spacingAndGlyphs" fill="#9a6aa4" stroke="#fff" stroke-opacity=".75" stroke-width="2" paint-order="stroke">Kosovë /</text>
<text x="666.2" y="790.0" font-size="14.8" textLength="53.7" lengthAdjust="spacingAndGlyphs" fill="#9a6aa4" stroke="#fff" stroke-opacity=".75" stroke-width="2" paint-order="stroke">Kosovo</text>
<text x="735.6" y="711.9" font-size="12" textLength="26.8" lengthAdjust="spacingAndGlyphs" fill="#606060" stroke="#fff" stroke-opacity=".75" stroke-width="2" paint-order="stroke">Ниш</text>
<text x="723.2" y="737.7" font-size="12" textLength="57.7" lengthAdjust="spacingAndGlyphs" fill="#606060" stroke="#fff" stroke-opacity=".75" stroke-width="2" paint-order="stroke">Лесковац</text>
<text x="762.5" y="777.3" font-size="12" textLength="43.6" lengthAdjust="spacingAndGlyphs" fill="#606060" stroke="#fff" stroke-opacity=".75" stroke-width="2" paint-order="stroke">Перник</text>
<text x="614.2" y="821.8" font-size="12.5" textLength="52.7" lengthAdjust="spacingAndGlyphs" fill="#a286b2" stroke="#fff" stroke-opacity=".75" stroke-width="2" paint-order="stroke" font-style="italic">Shqipëria</text>
<text x="621.5" y="836.2" font-size="12.5" textLength="37.9" lengthAdjust="spacingAndGlyphs" fill="#a286b2" stroke="#fff" stroke-opacity=".75" stroke-width="2" paint-order="stroke" font-style="italic">veriore</text>
<text x="730.6" y="827.6" font-size="14.8" textLength="47.0" lengthAdjust="spacingAndGlyphs" fill="#505050" stroke="#fff" stroke-opacity=".75" stroke-width="2" paint-order="stroke">Скопје</text>
<text x="694.7" y="857.8" font-size="14.8" textLength="92.3" lengthAdjust="spacingAndGlyphs" fill="#9a6aa4" stroke="#fff" stroke-opacity=".75" stroke-width="2" paint-order="stroke">Македонија</text>
<text x="608.1" y="860.9" font-size="12" textLength="38.6" lengthAdjust="spacingAndGlyphs" fill="#606060" stroke="#fff" stroke-opacity=".75" stroke-width="2" paint-order="stroke">Kamez</text>
<text x="435.3" y="876.3" font-size="12" textLength="46.0" lengthAdjust="spacingAndGlyphs" fill="#606060" stroke="#fff" stroke-opacity=".75" stroke-width="2" paint-order="stroke">Barletta</text>
<text x="602.1" y="893.0" font-size="14.8" textLength="70.8" lengthAdjust="spacingAndGlyphs" fill="#9a6aa4" stroke="#fff" stroke-opacity=".75" stroke-width="2" paint-order="stroke">Shqipëria</text>
<text x="432.6" y="901.3" font-size="12.5" textLength="33.9" lengthAdjust="spacingAndGlyphs" fill="#a286b2" stroke="#fff" stroke-opacity=".75" stroke-width="2" paint-order="stroke" font-style="italic">Puglia</text>
<text x="695.4" y="906.5" font-size="12" textLength="42.6" lengthAdjust="spacingAndGlyphs" fill="#606060" stroke="#fff" stroke-opacity=".75" stroke-width="2" paint-order="stroke">Битола</text>
<text x="463.2" y="930.0" font-size="12" textLength="42.6" lengthAdjust="spacingAndGlyphs" fill="#606060" stroke="#fff" stroke-opacity=".75" stroke-width="2" paint-order="stroke">Taranto</text>
<text x="529.9" y="926.6" font-size="12" textLength="43.0" lengthAdjust="spacingAndGlyphs" fill="#606060" stroke="#fff" stroke-opacity=".75" stroke-width="2" paint-order="stroke">Brindisi</text>
<text x="625.9" y="926.6" font-size="12" textLength="56.0" lengthAdjust="spacingAndGlyphs" fill="#606060" stroke="#fff" stroke-opacity=".75" stroke-width="2" paint-order="stroke">Çorovodë</text>
<text x="881.7" y="705.2" font-size="12" textLength="44.9" lengthAdjust="spacingAndGlyphs" fill="#606060" stroke="#fff" stroke-opacity=".75" stroke-width="2" paint-order="stroke">Плевен</text>
<text x="1072.6" y="721.1" font-size="12" textLength="37.1" lengthAdjust="spacingAndGlyphs" fill="#606060" stroke="#fff" stroke-opacity=".75" stroke-width="2" paint-order="stroke">Варна</text>
<text x="1013.6" y="736.2" font-size="12" textLength="42.8" lengthAdjust="spacingAndGlyphs" fill="#606060" stroke="#fff" stroke-opacity=".75" stroke-width="2" paint-order="stroke">Шумен</text>
<text x="807.5" y="758.1" font-size="14.8" textLength="45.5" lengthAdjust="spacingAndGlyphs" fill="#505050" stroke="#fff" stroke-opacity=".75" stroke-width="2" paint-order="stroke">София</text>
<text x="907.0" y="765.9" font-size="14.8" textLength="73.5" lengthAdjust="spacingAndGlyphs" fill="#9a6aa4" stroke="#fff" stroke-opacity=".75" stroke-width="2" paint-order="stroke">България</text>
<text x="1005.9" y="771.7" font-size="12" textLength="44.5" lengthAdjust="spacingAndGlyphs" fill="#606060" stroke="#fff" stroke-opacity=".75" stroke-width="2" paint-order="stroke">Сливен</text>
<text x="1047.0" y="795.9" font-size="12" textLength="39.1" lengthAdjust="spacingAndGlyphs" fill="#606060" stroke="#fff" stroke-opacity=".75" stroke-width="2" paint-order="stroke">Бургас</text>
<text x="885.1" y="822.2" font-size="12" textLength="52.6" lengthAdjust="spacingAndGlyphs" fill="#606060" stroke="#fff" stroke-opacity=".75" stroke-width="2" paint-order="stroke">Пловдив</text>
<text x="962.7" y="829.0" font-size="12" textLength="48.2" lengthAdjust="spacingAndGlyphs" fill="#606060" stroke="#fff" stroke-opacity=".75" stroke-width="2" paint-order="stroke">Хасково</text>
<text x="972.1" y="849.2" font-size="12" textLength="36.4" lengthAdjust="spacingAndGlyphs" fill="#606060" stroke="#fff" stroke-opacity=".75" stroke-width="2" paint-order="stroke">Edirne</text>
<text x="1026.8" y="853.3" font-size="12" textLength="50.6" lengthAdjust="spacingAndGlyphs" fill="#606060" stroke="#fff" stroke-opacity=".75" stroke-width="2" paint-order="stroke">Kırklareli</text>
<text x="1128.3" y="888.9" font-size="12.5" textLength="44.5" lengthAdjust="spacingAndGlyphs" fill="#a286b2" stroke="#fff" stroke-opacity=".75" stroke-width="2" paint-order="stroke" font-style="italic">İstanbul</text>
<text x="798.4" y="905.0" font-size="12.5" textLength="60.0" lengthAdjust="spacingAndGlyphs" fill="#a286b2" stroke="#fff" stroke-opacity=".75" stroke-width="2" paint-order="stroke" font-style="italic">Μακεδονία</text>
<text x="807.5" y="920.2" font-size="12.5" textLength="42.5" lengthAdjust="spacingAndGlyphs" fill="#a286b2" stroke="#fff" stroke-opacity=".75" stroke-width="2" paint-order="stroke" font-style="italic">- Θράκη</text>
<text x="1038.9" y="917.6" font-size="14.8" textLength="59.0" lengthAdjust="spacingAndGlyphs" fill="#505050" stroke="#fff" stroke-opacity=".75" stroke-width="2" paint-order="stroke">Tekirdağ</text>
<text x="1148.5" y="935.2" font-size="12" textLength="37.8" lengthAdjust="spacingAndGlyphs" fill="#606060" stroke="#fff" stroke-opacity=".75" stroke-width="2" paint-order="stroke">Yalova</text>
</g>
</g>
</svg>
<svg id="mk" width="1192" height="934" viewBox="0 0 1192 934">
<g id="markers">
<g transform="translate(683.4 487.0)"><path d="M0 0C-2.5-7-12.8-17.5-12.8-27.4A12.8 12.8 0 1 1 12.8-27.4C12.8-17.5 2.5-7 0 0Z" fill="#008000"/><circle cx="0" cy="-27.6" r="4.3" fill="#0a0a0a"/></g>
<g transform="translate(703.5 483.8)"><path d="M0 0C-2.5-7-12.8-17.5-12.8-27.4A12.8 12.8 0 1 1 12.8-27.4C12.8-17.5 2.5-7 0 0Z" fill="#008000"/><circle cx="0" cy="-27.6" r="4.3" fill="#0a0a0a"/></g>
<g transform="translate(812.0 338.0)"><path d="M0 0C-2.5-7-12.8-17.5-12.8-27.4A12.8 12.8 0 1 1 12.8-27.4C12.8-17.5 2.5-7 0 0Z" fill="#ffff00"/><circle cx="0" cy="-27.6" r="4.3" fill="#0a0a0a"/></g>
<g transform="translate(679.8 524.5)"><path d="M0 0C-2.5-7-12.8-17.5-12.8-27.4A12.8 12.8 0 1 1 12.8-27.4C12.8-17.5 2.5-7 0 0Z" fill="#008000"/><circle cx="0" cy="-27.6" r="4.3" fill="#0a0a0a"/></g>
<g transform="translate(712.3 566.2)"><path d="M0 0C-2.5-7-12.8-17.5-12.8-27.4A12.8 12.8 0 1 1 12.8-27.4C12.8-17.5 2.5-7 0 0Z" fill="#008000"/><circle cx="0" cy="-27.6" r="4.3" fill="#0a0a0a"/></g>
<g transform="translate(728.6 592.2)"><path d="M0 0C-2.5-7-12.8-17.5-12.8-27.4A12.8 12.8 0 1 1 12.8-27.4C12.8-17.5 2.5-7 0 0Z" fill="#008000"/><circle cx="0" cy="-27.6" r="4.3" fill="#0a0a0a"/></g>
<g transform="translate(783.8 611.5)"><path d="M0 0C-2.5-7-12.8-17.5-12.8-27.4A12.8 12.8 0 1 1 12.8-27.4C12.8-17.5 2.5-7 0 0Z" fill="#008000"/><circle cx="0" cy="-27.6" r="4.3" fill="#0a0a0a"/></g>
<g transform="translate(807.5 665.6)"><path d="M0 0C-2.5-7-12.8-17.5-12.8-27.4A12.8 12.8 0 1 1 12.8-27.4C12.8-17.5 2.5-7 0 0Z" fill="#008000"/><circle cx="0" cy="-27.6" r="4.3" fill="#0a0a0a"/></g>
<g transform="translate(865.1 684.2)"><path d="M0 0C-2.5-7-12.8-17.5-12.8-27.4A12.8 12.8 0 1 1 12.8-27.4C12.8-17.5 2.5-7 0 0Z" fill="#008000"/><circle cx="0" cy="-27.6" r="4.3" fill="#0a0a0a"/></g>
<g transform="translate(981.2 672.4)"><path d="M0 0C-2.5-7-12.8-17.5-12.8-27.4A12.8 12.8 0 1 1 12.8-27.4C12.8-17.5 2.5-7 0 0Z" fill="#008000"/><circle cx="0" cy="-27.6" r="4.3" fill="#0a0a0a"/></g>
<g transform="translate(1054.0 654.6)"><path d="M0 0C-2.5-7-12.8-17.5-12.8-27.4A12.8 12.8 0 1 1 12.8-27.4C12.8-17.5 2.5-7 0 0Z" fill="#008000"/><circle cx="0" cy="-27.6" r="4.3" fill="#0a0a0a"/></g>
<g transform="translate(1103.6 681.6)"><path d="M0 0C-2.5-7-12.8-17.5-12.8-27.4A12.8 12.8 0 1 1 12.8-27.4C12.8-17.5 2.5-7 0 0Z" fill="#008000"/><circle cx="0" cy="-27.6" r="4.3" fill="#0a0a0a"/></g>
<g transform="translate(1127.0 685.0)"><path d="M0 0C-2.5-7-12.8-17.5-12.8-27.4A12.8 12.8 0 1 1 12.8-27.4C12.8-17.5 2.5-7 0 0Z" fill="#008000"/><circle cx="0" cy="-27.6" r="4.3" fill="#0a0a0a"/></g>
<g transform="translate(1106.0 545.0)"><path d="M0 0C-2.5-7-12.8-17.5-12.8-27.4A12.8 12.8 0 1 1 12.8-27.4C12.8-17.5 2.5-7 0 0Z" fill="#008000"/><circle cx="0" cy="-27.6" r="4.3" fill="#0a0a0a"/></g>
<g transform="translate(1102.0 508.0)"><path d="M0 0C-2.5-7-12.8-17.5-12.8-27.4A12.8 12.8 0 1 1 12.8-27.4C12.8-17.5 2.5-7 0 0Z" fill="#008000"/><circle cx="0" cy="-27.6" r="4.3" fill="#0a0a0a"/></g>
<g transform="translate(1103.6 438.8)"><path d="M0 0C-2.5-7-12.8-17.5-12.8-27.4A12.8 12.8 0 1 1 12.8-27.4C12.8-17.5 2.5-7 0 0Z" fill="#008000"/><circle cx="0" cy="-27.6" r="4.3" fill="#0a0a0a"/></g>
<g transform="translate(1074.0 395.0)"><path d="M0 0C-2.5-7-12.8-17.5-12.8-27.4A12.8 12.8 0 1 1 12.8-27.4C12.8-17.5 2.5-7 0 0Z" fill="#008000"/><circle cx="0" cy="-27.6" r="4.3" fill="#0a0a0a"/></g>
<g transform="translate(1051.3 351.9)"><path d="M0 0C-2.5-7-12.8-17.5-12.8-27.4A12.8 12.8 0 1 1 12.8-27.4C12.8-17.5 2.5-7 0 0Z" fill="#008000"/><circle cx="0" cy="-27.6" r="4.3" fill="#0a0a0a"/></g>
<g transform="translate(985.0 336.6)"><path d="M0 0C-2.5-7-12.8-17.5-12.8-27.4A12.8 12.8 0 1 1 12.8-27.4C12.8-17.5 2.5-7 0 0Z" fill="#ffff00"/><circle cx="0" cy="-27.6" r="4.3" fill="#0a0a0a"/></g>
</g>
</svg>
<div id="hdr"><svg id="crest" width="38" height="53" viewBox="-6 5 38 53"><g>
<rect x="-6.600" y="14" width="11.800" height="30.500" rx="5" fill="#f3cf16"/>
<rect x="21" y="13.400" width="10.600" height="32.800" rx="5" fill="#f3cf16"/>
<path fill="#f3cf16" d="M9 24V16c0-2 1-3.500 1.500-5 .3-1.500 1-2.500 2.300-2.500s2.200 1 2.500 2.500c.5 1.500 1.700 3 1.700 5v8zM4.500 43.500h17l-2.300 6.500-6.200 6.800-6.200-6.800z"/>
<path fill="#5b4a1e" d="M8.200 9.800c.2-2 2-3.400 4.300-3.400s3.600 1.200 3.500 2.800l-2.700.2-1 1.600-2.300.4z"/>
<path fill="#2e9c3c" d="M3.200 21.900H23V38c0 3-4 4.600-9.900 4.900C7.200 42.600 3.200 41 3.200 38z"/>
<path fill="#a9b536" d="M5.600 24.600h15v12.600h-15z"/>
<path fill="#3f9a3e" d="M5.600 24.600h15v2.200h-15z"/>
<path fill="#8fa0ad" d="M10.600 27.400h5.600V38h-5.600z"/>
<path fill="#2c3a4a" d="M12.200 28.500h2.200v3.600h-2.200zM11.600 34.200h1.500v2.600h-1.500zM13.700 34.200h1.500v2.600h-1.500z"/>
<circle cx="2.600" cy="46.200" r="2.100" fill="#b3343c"/><circle cx="22.200" cy="46.200" r="2.100" fill="#b3343c"/>
<path stroke="#3b3a12" stroke-width="1.700" stroke-linecap="round" d="M28.400 25.200 24 44.500"/>
</g></svg><div id="brand">Poliția de Frontieră</div><div id="title">Trafic Online</div></div>
<div id="bar">
<div class="grp" style="left:6px"><div class="btn gray" style="width:167px"><svg class="ic" width="25" height="18" viewBox="0 0 28 20"><path fill="#fff" d="M6.2 1.2C6.6 .4 7.3 0 8.2 0h11.6c.9 0 1.6.4 2 1.2L24.6 7C26.5 7.3 28 8.6 28 10.6V15c0 .6-.4 1-1 1h-1.4v1.6c0 1.3-1 2.4-2.4 2.4s-2.400-1.100-2.400-2.400V16H7.200v1.600C7.200 18.900 6.200 20 4.800 20s-2.400-1.100-2.400-2.400V16H1c-.6 0-1-.4-1-1v-4.400C0 8.600 1.500 7.300 3.400 7zM7 7h14l-1.700-4.200c-.1-.3-.3-.4-.6-.4H9.300c-.3 0-.5.100-.6.400zM5 9.300c-1.200 0-2.100.9-2.100 2.100s.9 2.100 2.100 2.100 2.100-.9 2.100-2.100S6.200 9.300 5 9.300zm18 0c-1.200 0-2.100.9-2.100 2.100s.9 2.100 2.100 2.100 2.100-.9 2.100-2.100-.9-2.100-2.100-2.100z"/></svg>Autoturisme</div><div class="btn blue" style="width:145px"><svg class="ic" width="20" height="15.4" viewBox="0 0 26 20"><path fill="#fff" d="M9 0h16c.6 0 1 .4 1 1v14.500c0 .6-.4 1-1 1h-1.100c0 1.900-1.600 3.500-3.500 3.500s-3.500-1.600-3.500-3.500H10.100c0 1.900-1.600 3.500-3.500 3.500S3.100 18.400 3.100 16.500H1.500c-.6 0-1-.4-1-1v-5c0-.5.200-1 .6-1.400L4.400 5.800c.4-.4.900-.6 1.400-.6H8V1c0-.6.400-1 1-1zM8 7.200H6l-3.200 3.200V11H8zM6.600 14.700c-1 0-1.800.8-1.800 1.800s.8 1.800 1.800 1.800 1.800-.8 1.800-1.800-.8-1.800-1.800-1.800zm13.800 0c-1 0-1.800.8-1.800 1.800s.8 1.800 1.800 1.800 1.800-.8 1.800-1.800-.8-1.800-1.800-1.800z"/></svg>Camioane</div></div>
<div class="grp" style="left:337px"><div class="btn gray" style="width:109px"><svg class="ic" width="18" height="18" viewBox="0 0 18 18"><path fill="none" stroke="#fff" stroke-width="3.900" stroke-linecap="round" stroke-linejoin="round" d="M2 9h13M9.500 2.500 16 9l-6.500 6.500"/></svg>Intrare</div><div class="btn blue" style="width:101px"><svg class="ic" width="18" height="18" viewBox="0 0 18 18"><path fill="none" stroke="#fff" stroke-width="3.900" stroke-linecap="round" stroke-linejoin="round" d="M16 9H3M8.500 2.500 2 9l6.500 6.500"/></svg>Ieșire</div></div>
</div>
<div id="zoom"><div>+</div><div>&#8722;</div></div>
<div id="tip"></div>
<div id="pop"><h3>Nădlac II</h3><div class="x">×</div>
<div class="red"><svg class="ic" width="19" height="14" viewBox="0 0 26 20"><path fill="#fff" d="M9 0h16c.6 0 1 .4 1 1v14.500c0 .6-.4 1-1 1h-1.100c0 1.900-1.600 3.500-3.500 3.500s-3.500-1.600-3.500-3.500H10.100c0 1.900-1.600 3.500-3.500 3.500S3.100 18.400 3.100 16.500H1.500c-.6 0-1-.4-1-1v-5c0-.5.200-1 .6-1.400L4.400 5.800c.4-.4.900-.6 1.400-.6H8V1c0-.6.400-1 1-1zM8 7.200H6l-3.200 3.200V11H8zM6.600 14.700c-1 0-1.800.8-1.800 1.800s.8 1.800 1.800 1.800 1.800-.8 1.800-1.800-.8-1.800-1.800-1.800zm13.800 0c-1 0-1.800.8-1.800 1.800s.8 1.800 1.800 1.800 1.800-.8 1.800-1.800-.8-1.800-1.800-1.800z"/></svg>Timp de așteptare 220 min.</div>
<div class="tel">Telefon: 0257.474.593</div><div class="hr"></div>
<div class="art">Intrare: 2 artere; Iesire:4 artere</div>
<div class="nav">Navigare către<svg class="ic" width="17.500" height="16.400" viewBox="0 0 16 15"><path fill="none" stroke="#fff" stroke-width="1.900" stroke-linecap="round" stroke-linejoin="round" d="M11.500 8.500v3.700c0 .9-.7 1.600-1.600 1.600H2.800c-.9 0-1.600-.7-1.600-1.600V5.100c0-.9.700-1.600 1.600-1.600h4M9.800 1.200h5v5M14.500 1.500 7 9"/></svg></div></div>
</body></html>
